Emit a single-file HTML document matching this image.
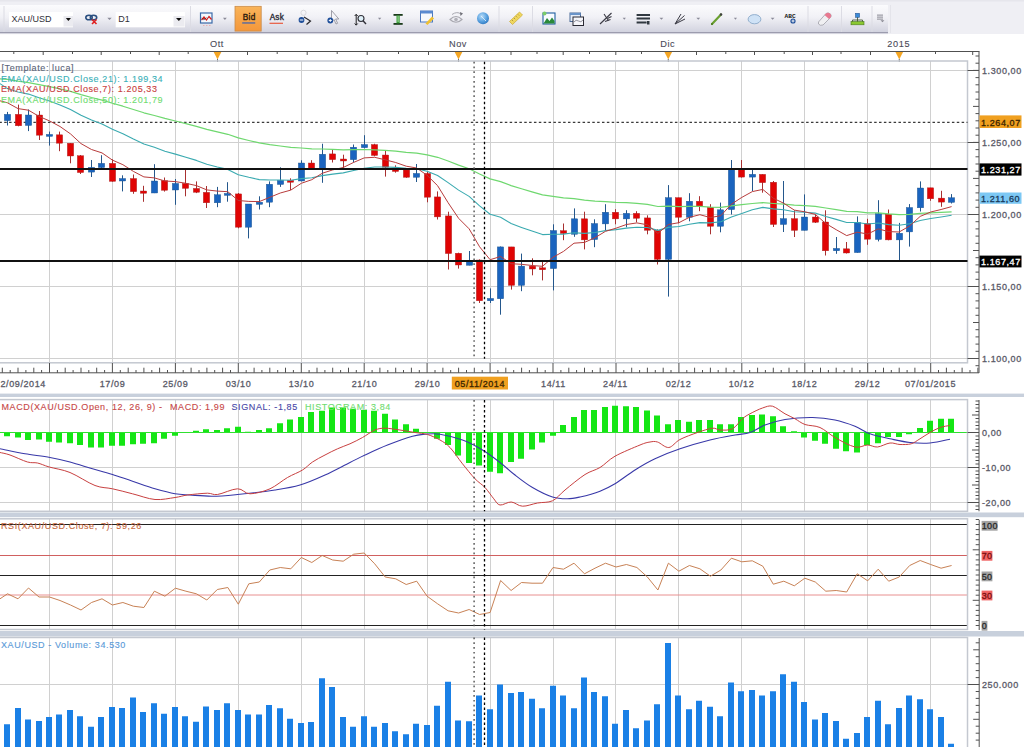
<!DOCTYPE html>
<html><head><meta charset="utf-8">
<style>
html,body{margin:0;padding:0;width:1024px;height:747px;overflow:hidden;background:#fff;font-family:"Liberation Sans", sans-serif;}
#chart{position:absolute;left:0;top:0;}
</style></head><body>
<svg id="chart" width="1024" height="747" viewBox="0 0 1024 747" font-family='"Liberation Sans", sans-serif' letter-spacing="0.6">
<line x1="0" y1="51.5" x2="979.5" y2="51.5" stroke="#505050" stroke-width="1"/>
<line x1="13.8" y1="51.5" x2="13.8" y2="54" stroke="#505050" stroke-width="1"/>
<line x1="43.2" y1="51.5" x2="43.2" y2="55" stroke="#505050" stroke-width="1"/>
<line x1="72.5" y1="51.5" x2="72.5" y2="54" stroke="#505050" stroke-width="1"/>
<line x1="101.2" y1="51.5" x2="101.2" y2="55" stroke="#505050" stroke-width="1"/>
<line x1="130.5" y1="51.5" x2="130.5" y2="54" stroke="#505050" stroke-width="1"/>
<line x1="159.2" y1="51.5" x2="159.2" y2="55" stroke="#505050" stroke-width="1"/>
<line x1="188.2" y1="51.5" x2="188.2" y2="54" stroke="#505050" stroke-width="1"/>
<line x1="247.5" y1="51.5" x2="247.5" y2="55" stroke="#505050" stroke-width="1"/>
<line x1="277.2" y1="51.5" x2="277.2" y2="54" stroke="#505050" stroke-width="1"/>
<line x1="307.2" y1="51.5" x2="307.2" y2="55" stroke="#505050" stroke-width="1"/>
<line x1="337.2" y1="51.5" x2="337.2" y2="54" stroke="#505050" stroke-width="1"/>
<line x1="367.2" y1="51.5" x2="367.2" y2="55" stroke="#505050" stroke-width="1"/>
<line x1="398.5" y1="51.5" x2="398.5" y2="54" stroke="#505050" stroke-width="1"/>
<line x1="428.5" y1="51.5" x2="428.5" y2="55" stroke="#505050" stroke-width="1"/>
<line x1="484.8" y1="51.5" x2="484.8" y2="54" stroke="#505050" stroke-width="1"/>
<line x1="511.0" y1="51.5" x2="511.0" y2="55" stroke="#505050" stroke-width="1"/>
<line x1="537.0" y1="51.5" x2="537.0" y2="54" stroke="#505050" stroke-width="1"/>
<line x1="563.2" y1="51.5" x2="563.2" y2="55" stroke="#505050" stroke-width="1"/>
<line x1="589.5" y1="51.5" x2="589.5" y2="54" stroke="#505050" stroke-width="1"/>
<line x1="615.8" y1="51.5" x2="615.8" y2="55" stroke="#505050" stroke-width="1"/>
<line x1="641.5" y1="51.5" x2="641.5" y2="54" stroke="#505050" stroke-width="1"/>
<line x1="696.5" y1="51.5" x2="696.5" y2="55" stroke="#505050" stroke-width="1"/>
<line x1="725.8" y1="51.5" x2="725.8" y2="54" stroke="#505050" stroke-width="1"/>
<line x1="754.5" y1="51.5" x2="754.5" y2="55" stroke="#505050" stroke-width="1"/>
<line x1="784.2" y1="51.5" x2="784.2" y2="54" stroke="#505050" stroke-width="1"/>
<line x1="812.5" y1="51.5" x2="812.5" y2="55" stroke="#505050" stroke-width="1"/>
<line x1="841.0" y1="51.5" x2="841.0" y2="54" stroke="#505050" stroke-width="1"/>
<line x1="870.5" y1="51.5" x2="870.5" y2="55" stroke="#505050" stroke-width="1"/>
<line x1="935.5" y1="51.5" x2="935.5" y2="54" stroke="#505050" stroke-width="1"/>
<line x1="972.7" y1="51.5" x2="972.7" y2="55" stroke="#505050" stroke-width="1"/>
<polygon points="213.7,52 221.3,52 217.5,59.5" fill="#f5a623"/>
<line x1="217.5" y1="59" x2="217.5" y2="62" stroke="#707070" stroke-width="1"/>
<text x="217.0" y="46.8" text-anchor="middle" font-size="9.2" stroke-width="0.1" fill="#4a4a58" stroke="#4a4a58">Ott</text>
<polygon points="454.7,52 462.3,52 458.5,59.5" fill="#f5a623"/>
<line x1="458.5" y1="59" x2="458.5" y2="62" stroke="#707070" stroke-width="1"/>
<text x="458.0" y="46.8" text-anchor="middle" font-size="9.2" stroke-width="0.1" fill="#4a4a58" stroke="#4a4a58">Nov</text>
<polygon points="664.45,52 672.05,52 668.25,59.5" fill="#f5a623"/>
<line x1="668.25" y1="59" x2="668.25" y2="62" stroke="#707070" stroke-width="1"/>
<text x="667.75" y="46.8" text-anchor="middle" font-size="9.2" stroke-width="0.1" fill="#4a4a58" stroke="#4a4a58">Dic</text>
<polygon points="895.45,52 903.05,52 899.25,59.5" fill="#f5a623"/>
<line x1="899.25" y1="59" x2="899.25" y2="62" stroke="#707070" stroke-width="1"/>
<text x="898.75" y="46.8" text-anchor="middle" font-size="9.2" stroke-width="0.1" fill="#4a4a58" stroke="#4a4a58">2015</text>
<line x1="49.5" y1="61" x2="49.5" y2="362.8" stroke="#d0d0d0" stroke-width="1"/>
<line x1="112.5" y1="61" x2="112.5" y2="362.8" stroke="#d0d0d0" stroke-width="1"/>
<line x1="175.5" y1="61" x2="175.5" y2="362.8" stroke="#d0d0d0" stroke-width="1"/>
<line x1="238.5" y1="61" x2="238.5" y2="362.8" stroke="#d0d0d0" stroke-width="1"/>
<line x1="301.5" y1="61" x2="301.5" y2="362.8" stroke="#d0d0d0" stroke-width="1"/>
<line x1="364.5" y1="61" x2="364.5" y2="362.8" stroke="#d0d0d0" stroke-width="1"/>
<line x1="427.5" y1="61" x2="427.5" y2="362.8" stroke="#d0d0d0" stroke-width="1"/>
<line x1="490.5" y1="61" x2="490.5" y2="362.8" stroke="#d0d0d0" stroke-width="1"/>
<line x1="553.5" y1="61" x2="553.5" y2="362.8" stroke="#d0d0d0" stroke-width="1"/>
<line x1="615.5" y1="61" x2="615.5" y2="362.8" stroke="#d0d0d0" stroke-width="1"/>
<line x1="678.5" y1="61" x2="678.5" y2="362.8" stroke="#d0d0d0" stroke-width="1"/>
<line x1="741.5" y1="61" x2="741.5" y2="362.8" stroke="#d0d0d0" stroke-width="1"/>
<line x1="804.5" y1="61" x2="804.5" y2="362.8" stroke="#d0d0d0" stroke-width="1"/>
<line x1="867.5" y1="61" x2="867.5" y2="362.8" stroke="#d0d0d0" stroke-width="1"/>
<line x1="930.5" y1="61" x2="930.5" y2="362.8" stroke="#d0d0d0" stroke-width="1"/>
<line x1="0" y1="70.5" x2="967.5" y2="70.5" stroke="#d0d0d0" stroke-width="1"/>
<line x1="0" y1="142.5" x2="967.5" y2="142.5" stroke="#d0d0d0" stroke-width="1"/>
<line x1="0" y1="214.5" x2="967.5" y2="214.5" stroke="#d0d0d0" stroke-width="1"/>
<line x1="0" y1="286.5" x2="967.5" y2="286.5" stroke="#d0d0d0" stroke-width="1"/>
<line x1="0" y1="358.5" x2="967.5" y2="358.5" stroke="#d0d0d0" stroke-width="1"/>
<rect x="-2" y="61" width="969.5" height="301.8" fill="none" stroke="#c4c8d0" stroke-width="1.5"/>
<line x1="979" y1="51.5" x2="979" y2="373" stroke="#505050" stroke-width="1"/>
<line x1="975.5" y1="56.0" x2="979" y2="56.0" stroke="#505050" stroke-width="1"/>
<line x1="975.5" y1="63.2" x2="979" y2="63.2" stroke="#505050" stroke-width="1"/>
<line x1="973" y1="70.4" x2="979" y2="70.4" stroke="#505050" stroke-width="1"/>
<line x1="975.5" y1="77.6" x2="979" y2="77.6" stroke="#505050" stroke-width="1"/>
<line x1="975.5" y1="84.8" x2="979" y2="84.8" stroke="#505050" stroke-width="1"/>
<line x1="975.5" y1="92.0" x2="979" y2="92.0" stroke="#505050" stroke-width="1"/>
<line x1="975.5" y1="99.2" x2="979" y2="99.2" stroke="#505050" stroke-width="1"/>
<line x1="973" y1="106.4" x2="979" y2="106.4" stroke="#505050" stroke-width="1"/>
<line x1="975.5" y1="113.6" x2="979" y2="113.6" stroke="#505050" stroke-width="1"/>
<line x1="975.5" y1="120.8" x2="979" y2="120.8" stroke="#505050" stroke-width="1"/>
<line x1="975.5" y1="128.0" x2="979" y2="128.0" stroke="#505050" stroke-width="1"/>
<line x1="975.5" y1="135.2" x2="979" y2="135.2" stroke="#505050" stroke-width="1"/>
<line x1="973" y1="142.4" x2="979" y2="142.4" stroke="#505050" stroke-width="1"/>
<line x1="975.5" y1="149.6" x2="979" y2="149.6" stroke="#505050" stroke-width="1"/>
<line x1="975.5" y1="156.8" x2="979" y2="156.8" stroke="#505050" stroke-width="1"/>
<line x1="975.5" y1="164.0" x2="979" y2="164.0" stroke="#505050" stroke-width="1"/>
<line x1="975.5" y1="171.2" x2="979" y2="171.2" stroke="#505050" stroke-width="1"/>
<line x1="973" y1="178.4" x2="979" y2="178.4" stroke="#505050" stroke-width="1"/>
<line x1="975.5" y1="185.6" x2="979" y2="185.6" stroke="#505050" stroke-width="1"/>
<line x1="975.5" y1="192.9" x2="979" y2="192.9" stroke="#505050" stroke-width="1"/>
<line x1="975.5" y1="200.1" x2="979" y2="200.1" stroke="#505050" stroke-width="1"/>
<line x1="975.5" y1="207.3" x2="979" y2="207.3" stroke="#505050" stroke-width="1"/>
<line x1="973" y1="214.5" x2="979" y2="214.5" stroke="#505050" stroke-width="1"/>
<line x1="975.5" y1="221.7" x2="979" y2="221.7" stroke="#505050" stroke-width="1"/>
<line x1="975.5" y1="228.9" x2="979" y2="228.9" stroke="#505050" stroke-width="1"/>
<line x1="975.5" y1="236.1" x2="979" y2="236.1" stroke="#505050" stroke-width="1"/>
<line x1="975.5" y1="243.3" x2="979" y2="243.3" stroke="#505050" stroke-width="1"/>
<line x1="973" y1="250.5" x2="979" y2="250.5" stroke="#505050" stroke-width="1"/>
<line x1="975.5" y1="257.7" x2="979" y2="257.7" stroke="#505050" stroke-width="1"/>
<line x1="975.5" y1="264.9" x2="979" y2="264.9" stroke="#505050" stroke-width="1"/>
<line x1="975.5" y1="272.1" x2="979" y2="272.1" stroke="#505050" stroke-width="1"/>
<line x1="975.5" y1="279.3" x2="979" y2="279.3" stroke="#505050" stroke-width="1"/>
<line x1="973" y1="286.5" x2="979" y2="286.5" stroke="#505050" stroke-width="1"/>
<line x1="975.5" y1="293.7" x2="979" y2="293.7" stroke="#505050" stroke-width="1"/>
<line x1="975.5" y1="300.9" x2="979" y2="300.9" stroke="#505050" stroke-width="1"/>
<line x1="975.5" y1="308.1" x2="979" y2="308.1" stroke="#505050" stroke-width="1"/>
<line x1="975.5" y1="315.3" x2="979" y2="315.3" stroke="#505050" stroke-width="1"/>
<line x1="973" y1="322.5" x2="979" y2="322.5" stroke="#505050" stroke-width="1"/>
<line x1="975.5" y1="329.7" x2="979" y2="329.7" stroke="#505050" stroke-width="1"/>
<line x1="975.5" y1="336.9" x2="979" y2="336.9" stroke="#505050" stroke-width="1"/>
<line x1="975.5" y1="344.1" x2="979" y2="344.1" stroke="#505050" stroke-width="1"/>
<line x1="975.5" y1="351.3" x2="979" y2="351.3" stroke="#505050" stroke-width="1"/>
<line x1="973" y1="358.5" x2="979" y2="358.5" stroke="#505050" stroke-width="1"/>
<line x1="975.5" y1="365.7" x2="979" y2="365.7" stroke="#505050" stroke-width="1"/>
<line x1="967.5" y1="70.5" x2="979" y2="70.5" stroke="#505050" stroke-width="1"/>
<text x="982" y="74.1" font-size="9" fill="#5a5a68" stroke="#5a5a68" stroke-width="0.3">1.300,00</text>
<line x1="967.5" y1="142.5" x2="979" y2="142.5" stroke="#505050" stroke-width="1"/>
<text x="982" y="146.1" font-size="9" fill="#5a5a68" stroke="#5a5a68" stroke-width="0.3">1.250,00</text>
<line x1="967.5" y1="214.5" x2="979" y2="214.5" stroke="#505050" stroke-width="1"/>
<text x="982" y="218.1" font-size="9" fill="#5a5a68" stroke="#5a5a68" stroke-width="0.3">1.200,00</text>
<line x1="967.5" y1="286.5" x2="979" y2="286.5" stroke="#505050" stroke-width="1"/>
<text x="982" y="290.1" font-size="9" fill="#5a5a68" stroke="#5a5a68" stroke-width="0.3">1.150,00</text>
<line x1="967.5" y1="358.5" x2="979" y2="358.5" stroke="#505050" stroke-width="1"/>
<text x="982" y="362.1" font-size="9" fill="#5a5a68" stroke="#5a5a68" stroke-width="0.3">1.100,00</text>
<line x1="0" y1="122.3" x2="967.5" y2="122.3" stroke="#3a3a3a" stroke-width="1.3" stroke-dasharray="2.5,2.36" stroke-dashoffset="0.64"/>
<line x1="7.5" y1="111.9" x2="7.5" y2="125.5" stroke="#24578c" stroke-width="1"/>
<rect x="4.3" y="114.3" width="6.4" height="6.4" fill="#1a64bf" stroke="#24578c" stroke-width="0.4"/>
<line x1="18.5" y1="104.6" x2="18.5" y2="126.3" stroke="#a83030" stroke-width="1"/>
<rect x="15.3" y="114.3" width="6.4" height="11.5" fill="#e00404" stroke="#a83030" stroke-width="0.4"/>
<line x1="28.5" y1="109.5" x2="28.5" y2="131.1" stroke="#24578c" stroke-width="1"/>
<rect x="25.3" y="115.0" width="6.4" height="10.5" fill="#1a64bf" stroke="#24578c" stroke-width="0.4"/>
<line x1="39.5" y1="111.0" x2="39.5" y2="140.0" stroke="#a83030" stroke-width="1"/>
<rect x="36.3" y="115.0" width="6.4" height="20.2" fill="#e00404" stroke="#a83030" stroke-width="0.4"/>
<line x1="49.5" y1="131.6" x2="49.5" y2="145.6" stroke="#24578c" stroke-width="1"/>
<rect x="46.3" y="134.4" width="6.4" height="2.0" fill="#1a64bf" stroke="#24578c" stroke-width="0.4"/>
<line x1="59.5" y1="131.6" x2="59.5" y2="151.2" stroke="#a83030" stroke-width="1"/>
<rect x="56.3" y="134.8" width="6.4" height="8.4" fill="#e00404" stroke="#a83030" stroke-width="0.4"/>
<line x1="70.5" y1="143.0" x2="70.5" y2="163.3" stroke="#a83030" stroke-width="1"/>
<rect x="67.3" y="143.2" width="6.4" height="12.8" fill="#e00404" stroke="#a83030" stroke-width="0.4"/>
<line x1="80.5" y1="155.0" x2="80.5" y2="174.0" stroke="#a83030" stroke-width="1"/>
<rect x="77.3" y="155.7" width="6.4" height="16.9" fill="#e00404" stroke="#a83030" stroke-width="0.4"/>
<line x1="91.5" y1="160.0" x2="91.5" y2="177.0" stroke="#24578c" stroke-width="1"/>
<rect x="88.3" y="167.3" width="6.4" height="4.8" fill="#1a64bf" stroke="#24578c" stroke-width="0.4"/>
<line x1="101.5" y1="155.2" x2="101.5" y2="168.0" stroke="#24578c" stroke-width="1"/>
<rect x="98.3" y="163.3" width="6.4" height="4.3" fill="#1a64bf" stroke="#24578c" stroke-width="0.4"/>
<line x1="112.5" y1="159.3" x2="112.5" y2="181.7" stroke="#a83030" stroke-width="1"/>
<rect x="109.3" y="163.3" width="6.4" height="18.1" fill="#e00404" stroke="#a83030" stroke-width="0.4"/>
<line x1="122.5" y1="175.3" x2="122.5" y2="191.4" stroke="#24578c" stroke-width="1"/>
<rect x="119.3" y="178.5" width="6.4" height="2.5" fill="#1a64bf" stroke="#24578c" stroke-width="0.4"/>
<line x1="133.5" y1="174.5" x2="133.5" y2="193.8" stroke="#a83030" stroke-width="1"/>
<rect x="130.3" y="178.5" width="6.4" height="13.2" fill="#e00404" stroke="#a83030" stroke-width="0.4"/>
<line x1="143.5" y1="185.8" x2="143.5" y2="201.8" stroke="#a83030" stroke-width="1"/>
<rect x="140.3" y="191.0" width="6.4" height="2.3" fill="#e00404" stroke="#a83030" stroke-width="0.4"/>
<line x1="154.5" y1="164.2" x2="154.5" y2="193.1" stroke="#24578c" stroke-width="1"/>
<rect x="151.3" y="181.0" width="6.4" height="12.0" fill="#1a64bf" stroke="#24578c" stroke-width="0.4"/>
<line x1="164.5" y1="177.5" x2="164.5" y2="191.6" stroke="#a83030" stroke-width="1"/>
<rect x="161.3" y="180.6" width="6.4" height="9.7" fill="#e00404" stroke="#a83030" stroke-width="0.4"/>
<line x1="175.5" y1="179.0" x2="175.5" y2="204.8" stroke="#24578c" stroke-width="1"/>
<rect x="172.3" y="183.4" width="6.4" height="6.6" fill="#1a64bf" stroke="#24578c" stroke-width="0.4"/>
<line x1="185.5" y1="169.7" x2="185.5" y2="196.3" stroke="#a83030" stroke-width="1"/>
<rect x="182.3" y="183.4" width="6.4" height="5.0" fill="#e00404" stroke="#a83030" stroke-width="0.4"/>
<line x1="196.5" y1="181.4" x2="196.5" y2="193.1" stroke="#a83030" stroke-width="1"/>
<rect x="193.3" y="188.4" width="6.4" height="3.9" fill="#e00404" stroke="#a83030" stroke-width="0.4"/>
<line x1="206.5" y1="186.0" x2="206.5" y2="208.0" stroke="#a83030" stroke-width="1"/>
<rect x="203.3" y="192.3" width="6.4" height="10.5" fill="#e00404" stroke="#a83030" stroke-width="0.4"/>
<line x1="217.5" y1="186.9" x2="217.5" y2="207.2" stroke="#24578c" stroke-width="1"/>
<rect x="214.3" y="194.7" width="6.4" height="8.1" fill="#1a64bf" stroke="#24578c" stroke-width="0.4"/>
<line x1="227.5" y1="182.2" x2="227.5" y2="201.7" stroke="#24578c" stroke-width="1"/>
<rect x="224.3" y="193.4" width="6.4" height="2.0" fill="#1a64bf" stroke="#24578c" stroke-width="0.4"/>
<line x1="238.5" y1="193.0" x2="238.5" y2="228.3" stroke="#a83030" stroke-width="1"/>
<rect x="235.3" y="193.9" width="6.4" height="33.3" fill="#e00404" stroke="#a83030" stroke-width="0.4"/>
<line x1="248.5" y1="204.0" x2="248.5" y2="238.4" stroke="#24578c" stroke-width="1"/>
<rect x="245.3" y="204.0" width="6.4" height="23.2" fill="#1a64bf" stroke="#24578c" stroke-width="0.4"/>
<line x1="259.5" y1="196.3" x2="259.5" y2="209.5" stroke="#24578c" stroke-width="1"/>
<rect x="256.3" y="202.2" width="6.4" height="2.2" fill="#1a64bf" stroke="#24578c" stroke-width="0.4"/>
<line x1="269.5" y1="181.4" x2="269.5" y2="207.2" stroke="#24578c" stroke-width="1"/>
<rect x="266.3" y="184.2" width="6.4" height="18.0" fill="#1a64bf" stroke="#24578c" stroke-width="0.4"/>
<line x1="280.5" y1="167.3" x2="280.5" y2="186.9" stroke="#24578c" stroke-width="1"/>
<rect x="277.3" y="180.3" width="6.4" height="4.2" fill="#1a64bf" stroke="#24578c" stroke-width="0.4"/>
<line x1="290.5" y1="178.3" x2="290.5" y2="190.0" stroke="#a83030" stroke-width="1"/>
<rect x="287.3" y="180.3" width="6.4" height="2.0" fill="#e00404" stroke="#a83030" stroke-width="0.4"/>
<line x1="301.5" y1="160.3" x2="301.5" y2="181.4" stroke="#24578c" stroke-width="1"/>
<rect x="298.3" y="163.0" width="6.4" height="18.0" fill="#1a64bf" stroke="#24578c" stroke-width="0.4"/>
<line x1="311.5" y1="160.2" x2="311.5" y2="169.5" stroke="#a83030" stroke-width="1"/>
<rect x="308.3" y="163.0" width="6.4" height="5.8" fill="#e00404" stroke="#a83030" stroke-width="0.4"/>
<line x1="322.5" y1="143.75" x2="322.5" y2="182.8" stroke="#24578c" stroke-width="1"/>
<rect x="319.3" y="154.2" width="6.4" height="14.6" fill="#1a64bf" stroke="#24578c" stroke-width="0.4"/>
<line x1="332.5" y1="150.0" x2="332.5" y2="162.5" stroke="#a83030" stroke-width="1"/>
<rect x="329.3" y="153.9" width="6.4" height="5.8" fill="#e00404" stroke="#a83030" stroke-width="0.4"/>
<line x1="343.5" y1="154.7" x2="343.5" y2="168.75" stroke="#a83030" stroke-width="1"/>
<rect x="340.3" y="159.0" width="6.4" height="2.0" fill="#e00404" stroke="#a83030" stroke-width="0.4"/>
<line x1="353.5" y1="144.5" x2="353.5" y2="162.5" stroke="#24578c" stroke-width="1"/>
<rect x="350.3" y="147.2" width="6.4" height="12.5" fill="#1a64bf" stroke="#24578c" stroke-width="0.4"/>
<line x1="364.5" y1="135.2" x2="364.5" y2="148.4" stroke="#24578c" stroke-width="1"/>
<rect x="361.3" y="144.5" width="6.4" height="3.2" fill="#1a64bf" stroke="#24578c" stroke-width="0.4"/>
<line x1="374.5" y1="143.75" x2="374.5" y2="156.25" stroke="#a83030" stroke-width="1"/>
<rect x="371.3" y="144.5" width="6.4" height="11.0" fill="#e00404" stroke="#a83030" stroke-width="0.4"/>
<line x1="385.5" y1="150.8" x2="385.5" y2="176.6" stroke="#a83030" stroke-width="1"/>
<rect x="382.3" y="155.0" width="6.4" height="12.2" fill="#e00404" stroke="#a83030" stroke-width="0.4"/>
<line x1="395.5" y1="165.3" x2="395.5" y2="172.7" stroke="#a83030" stroke-width="1"/>
<rect x="392.3" y="169.5" width="6.4" height="2.0" fill="#e00404" stroke="#a83030" stroke-width="0.4"/>
<line x1="406.5" y1="169.5" x2="406.5" y2="177.8" stroke="#a83030" stroke-width="1"/>
<rect x="403.3" y="170.0" width="6.4" height="7.3" fill="#e00404" stroke="#a83030" stroke-width="0.4"/>
<line x1="416.5" y1="164.0" x2="416.5" y2="182.0" stroke="#24578c" stroke-width="1"/>
<rect x="413.3" y="173.4" width="6.4" height="3.9" fill="#1a64bf" stroke="#24578c" stroke-width="0.4"/>
<line x1="427.5" y1="171.9" x2="427.5" y2="202.3" stroke="#a83030" stroke-width="1"/>
<rect x="424.3" y="173.4" width="6.4" height="23.8" fill="#e00404" stroke="#a83030" stroke-width="0.4"/>
<line x1="437.5" y1="191.4" x2="437.5" y2="219.5" stroke="#a83030" stroke-width="1"/>
<rect x="434.3" y="196.9" width="6.4" height="20.0" fill="#e00404" stroke="#a83030" stroke-width="0.4"/>
<line x1="448.5" y1="211.7" x2="448.5" y2="269.5" stroke="#a83030" stroke-width="1"/>
<rect x="445.3" y="215.9" width="6.4" height="37.7" fill="#e00404" stroke="#a83030" stroke-width="0.4"/>
<line x1="458.5" y1="252.7" x2="458.5" y2="268.6" stroke="#a83030" stroke-width="1"/>
<rect x="455.3" y="253.2" width="6.4" height="11.8" fill="#e00404" stroke="#a83030" stroke-width="0.4"/>
<line x1="469.5" y1="251.0" x2="469.5" y2="265.3" stroke="#24578c" stroke-width="1"/>
<rect x="466.3" y="260.3" width="6.4" height="5.0" fill="#1a64bf" stroke="#24578c" stroke-width="0.4"/>
<line x1="479.5" y1="259.4" x2="479.5" y2="303.0" stroke="#a83030" stroke-width="1"/>
<rect x="476.3" y="260.0" width="6.4" height="40.8" fill="#e00404" stroke="#a83030" stroke-width="0.4"/>
<line x1="490.5" y1="288.4" x2="490.5" y2="303.0" stroke="#24578c" stroke-width="1"/>
<rect x="487.3" y="298.4" width="6.4" height="2.4" fill="#1a64bf" stroke="#24578c" stroke-width="0.4"/>
<line x1="500.5" y1="246.5" x2="500.5" y2="314.7" stroke="#24578c" stroke-width="1"/>
<rect x="497.3" y="246.9" width="6.4" height="51.9" fill="#1a64bf" stroke="#24578c" stroke-width="0.4"/>
<line x1="511.5" y1="246.9" x2="511.5" y2="289.6" stroke="#a83030" stroke-width="1"/>
<rect x="508.3" y="246.9" width="6.4" height="38.5" fill="#e00404" stroke="#a83030" stroke-width="0.4"/>
<line x1="521.5" y1="253.6" x2="521.5" y2="291.2" stroke="#24578c" stroke-width="1"/>
<rect x="518.3" y="266.1" width="6.4" height="19.3" fill="#1a64bf" stroke="#24578c" stroke-width="0.4"/>
<line x1="532.5" y1="258.3" x2="532.5" y2="275.3" stroke="#a83030" stroke-width="1"/>
<rect x="529.3" y="266.1" width="6.4" height="2.9" fill="#e00404" stroke="#a83030" stroke-width="0.4"/>
<line x1="542.5" y1="261.0" x2="542.5" y2="280.4" stroke="#a83030" stroke-width="1"/>
<rect x="539.3" y="267.8" width="6.4" height="2.0" fill="#e00404" stroke="#a83030" stroke-width="0.4"/>
<line x1="553.5" y1="224.3" x2="553.5" y2="290.4" stroke="#24578c" stroke-width="1"/>
<rect x="550.3" y="230.5" width="6.4" height="38.1" fill="#1a64bf" stroke="#24578c" stroke-width="0.4"/>
<line x1="563.5" y1="223.5" x2="563.5" y2="240.2" stroke="#a83030" stroke-width="1"/>
<rect x="560.3" y="230.6" width="6.4" height="2.9" fill="#e00404" stroke="#a83030" stroke-width="0.4"/>
<line x1="574.5" y1="208.4" x2="574.5" y2="236.8" stroke="#24578c" stroke-width="1"/>
<rect x="571.3" y="218.8" width="6.4" height="15.5" fill="#1a64bf" stroke="#24578c" stroke-width="0.4"/>
<line x1="584.5" y1="211.7" x2="584.5" y2="249.4" stroke="#a83030" stroke-width="1"/>
<rect x="581.3" y="218.8" width="6.4" height="21.1" fill="#e00404" stroke="#a83030" stroke-width="0.4"/>
<line x1="594.5" y1="219.3" x2="594.5" y2="247.2" stroke="#24578c" stroke-width="1"/>
<rect x="591.3" y="223.5" width="6.4" height="16.1" fill="#1a64bf" stroke="#24578c" stroke-width="0.4"/>
<line x1="605.5" y1="204.2" x2="605.5" y2="230.3" stroke="#24578c" stroke-width="1"/>
<rect x="602.3" y="212.2" width="6.4" height="11.7" fill="#1a64bf" stroke="#24578c" stroke-width="0.4"/>
<line x1="615.5" y1="209.2" x2="615.5" y2="224.3" stroke="#a83030" stroke-width="1"/>
<rect x="612.3" y="212.2" width="6.4" height="6.7" fill="#e00404" stroke="#a83030" stroke-width="0.4"/>
<line x1="626.5" y1="210.2" x2="626.5" y2="227.3" stroke="#24578c" stroke-width="1"/>
<rect x="623.3" y="213.3" width="6.4" height="5.6" fill="#1a64bf" stroke="#24578c" stroke-width="0.4"/>
<line x1="636.5" y1="211.2" x2="636.5" y2="222.3" stroke="#a83030" stroke-width="1"/>
<rect x="633.3" y="213.3" width="6.4" height="5.0" fill="#e00404" stroke="#a83030" stroke-width="0.4"/>
<line x1="647.5" y1="215.3" x2="647.5" y2="234.3" stroke="#a83030" stroke-width="1"/>
<rect x="644.3" y="217.9" width="6.4" height="12.4" fill="#e00404" stroke="#a83030" stroke-width="0.4"/>
<line x1="657.5" y1="229.3" x2="657.5" y2="264.5" stroke="#a83030" stroke-width="1"/>
<rect x="654.3" y="230.3" width="6.4" height="29.1" fill="#e00404" stroke="#a83030" stroke-width="0.4"/>
<line x1="668.5" y1="185.1" x2="668.5" y2="296.6" stroke="#24578c" stroke-width="1"/>
<rect x="665.3" y="197.6" width="6.4" height="61.8" fill="#1a64bf" stroke="#24578c" stroke-width="0.4"/>
<line x1="678.5" y1="197.6" x2="678.5" y2="223.3" stroke="#a83030" stroke-width="1"/>
<rect x="675.3" y="197.6" width="6.4" height="19.7" fill="#e00404" stroke="#a83030" stroke-width="0.4"/>
<line x1="689.5" y1="193.2" x2="689.5" y2="221.3" stroke="#24578c" stroke-width="1"/>
<rect x="686.3" y="201.2" width="6.4" height="16.1" fill="#1a64bf" stroke="#24578c" stroke-width="0.4"/>
<line x1="699.5" y1="196.2" x2="699.5" y2="211.2" stroke="#a83030" stroke-width="1"/>
<rect x="696.3" y="201.2" width="6.4" height="5.6" fill="#e00404" stroke="#a83030" stroke-width="0.4"/>
<line x1="710.5" y1="204.2" x2="710.5" y2="234.3" stroke="#a83030" stroke-width="1"/>
<rect x="707.3" y="207.2" width="6.4" height="19.1" fill="#e00404" stroke="#a83030" stroke-width="0.4"/>
<line x1="720.5" y1="202.6" x2="720.5" y2="232.3" stroke="#24578c" stroke-width="1"/>
<rect x="717.3" y="209.8" width="6.4" height="16.5" fill="#1a64bf" stroke="#24578c" stroke-width="0.4"/>
<line x1="731.5" y1="160.0" x2="731.5" y2="214.5" stroke="#24578c" stroke-width="1"/>
<rect x="728.3" y="169.8" width="6.4" height="39.8" fill="#1a64bf" stroke="#24578c" stroke-width="0.4"/>
<line x1="741.5" y1="160.0" x2="741.5" y2="177.6" stroke="#a83030" stroke-width="1"/>
<rect x="738.3" y="169.8" width="6.4" height="7.3" fill="#e00404" stroke="#a83030" stroke-width="0.4"/>
<line x1="752.5" y1="168.4" x2="752.5" y2="191.0" stroke="#24578c" stroke-width="1"/>
<rect x="749.3" y="174.3" width="6.4" height="2.8" fill="#1a64bf" stroke="#24578c" stroke-width="0.4"/>
<line x1="762.5" y1="174.3" x2="762.5" y2="192.7" stroke="#a83030" stroke-width="1"/>
<rect x="759.3" y="174.3" width="6.4" height="8.4" fill="#e00404" stroke="#a83030" stroke-width="0.4"/>
<line x1="773.5" y1="181.0" x2="773.5" y2="227.0" stroke="#a83030" stroke-width="1"/>
<rect x="770.3" y="182.2" width="6.4" height="42.3" fill="#e00404" stroke="#a83030" stroke-width="0.4"/>
<line x1="783.5" y1="181.0" x2="783.5" y2="232.0" stroke="#24578c" stroke-width="1"/>
<rect x="780.3" y="218.6" width="6.4" height="5.9" fill="#1a64bf" stroke="#24578c" stroke-width="0.4"/>
<line x1="794.5" y1="210.3" x2="794.5" y2="237.0" stroke="#a83030" stroke-width="1"/>
<rect x="791.3" y="218.6" width="6.4" height="11.8" fill="#e00404" stroke="#a83030" stroke-width="0.4"/>
<line x1="804.5" y1="194.4" x2="804.5" y2="230.4" stroke="#24578c" stroke-width="1"/>
<rect x="801.3" y="217.0" width="6.4" height="13.4" fill="#1a64bf" stroke="#24578c" stroke-width="0.4"/>
<line x1="815.5" y1="214.5" x2="815.5" y2="223.0" stroke="#a83030" stroke-width="1"/>
<rect x="812.3" y="217.0" width="6.4" height="5.3" fill="#e00404" stroke="#a83030" stroke-width="0.4"/>
<line x1="825.5" y1="210.3" x2="825.5" y2="255.5" stroke="#a83030" stroke-width="1"/>
<rect x="822.3" y="222.0" width="6.4" height="28.8" fill="#e00404" stroke="#a83030" stroke-width="0.4"/>
<line x1="836.5" y1="237.0" x2="836.5" y2="253.8" stroke="#24578c" stroke-width="1"/>
<rect x="833.3" y="248.4" width="6.4" height="2.4" fill="#1a64bf" stroke="#24578c" stroke-width="0.4"/>
<line x1="846.5" y1="242.0" x2="846.5" y2="253.5" stroke="#a83030" stroke-width="1"/>
<rect x="843.3" y="248.8" width="6.4" height="4.2" fill="#e00404" stroke="#a83030" stroke-width="0.4"/>
<line x1="857.5" y1="216.4" x2="857.5" y2="252.6" stroke="#24578c" stroke-width="1"/>
<rect x="854.3" y="222.3" width="6.4" height="30.3" fill="#1a64bf" stroke="#24578c" stroke-width="0.4"/>
<line x1="867.5" y1="218.8" x2="867.5" y2="244.8" stroke="#a83030" stroke-width="1"/>
<rect x="864.3" y="223.5" width="6.4" height="15.7" fill="#e00404" stroke="#a83030" stroke-width="0.4"/>
<line x1="878.5" y1="200.2" x2="878.5" y2="241.4" stroke="#24578c" stroke-width="1"/>
<rect x="875.3" y="213.5" width="6.4" height="26.0" fill="#1a64bf" stroke="#24578c" stroke-width="0.4"/>
<line x1="888.5" y1="209.5" x2="888.5" y2="240.3" stroke="#a83030" stroke-width="1"/>
<rect x="885.3" y="214.2" width="6.4" height="25.7" fill="#e00404" stroke="#a83030" stroke-width="0.4"/>
<line x1="899.5" y1="222.9" x2="899.5" y2="261.0" stroke="#24578c" stroke-width="1"/>
<rect x="896.3" y="233.2" width="6.4" height="6.7" fill="#1a64bf" stroke="#24578c" stroke-width="0.4"/>
<line x1="909.5" y1="204.1" x2="909.5" y2="246.6" stroke="#24578c" stroke-width="1"/>
<rect x="906.3" y="207.5" width="6.4" height="24.4" fill="#1a64bf" stroke="#24578c" stroke-width="0.4"/>
<line x1="920.5" y1="181.4" x2="920.5" y2="211.5" stroke="#24578c" stroke-width="1"/>
<rect x="917.3" y="188.0" width="6.4" height="19.8" fill="#1a64bf" stroke="#24578c" stroke-width="0.4"/>
<line x1="930.5" y1="187.8" x2="930.5" y2="200.8" stroke="#a83030" stroke-width="1"/>
<rect x="927.3" y="187.8" width="6.4" height="11.0" fill="#e00404" stroke="#a83030" stroke-width="0.4"/>
<line x1="941.5" y1="190.8" x2="941.5" y2="206.8" stroke="#a83030" stroke-width="1"/>
<rect x="938.3" y="198.1" width="6.4" height="4.0" fill="#e00404" stroke="#a83030" stroke-width="0.4"/>
<line x1="951.5" y1="194.1" x2="951.5" y2="203.5" stroke="#24578c" stroke-width="1"/>
<rect x="948.3" y="197.7" width="6.4" height="4.7" fill="#1a64bf" stroke="#24578c" stroke-width="0.4"/>
<polyline points="0.0,78.9 7.5,79.4 18.0,81.2 28.5,82.6 39.0,84.6 49.5,86.6 60.0,88.8 70.5,91.4 81.0,94.6 91.5,97.5 102.0,100.1 112.4,103.2 122.9,106.2 133.4,109.5 143.9,112.8 154.4,115.5 164.9,118.4 175.4,121.0 185.9,123.6 196.4,126.3 206.8,129.3 217.3,131.9 227.8,134.3 238.3,137.9 248.8,140.5 259.3,142.9 269.8,144.6 280.3,146.0 290.8,147.4 301.3,148.0 311.8,148.8 322.2,149.0 332.7,149.4 343.2,149.8 353.7,149.7 364.2,149.5 374.7,149.8 385.2,150.4 395.7,151.2 406.2,152.3 416.7,153.1 427.1,154.8 437.6,157.3 448.1,161.0 458.6,165.1 469.1,168.8 479.6,174.0 490.1,178.9 500.6,181.6 511.1,185.6 521.5,188.8 532.0,191.9 542.5,194.9 553.0,196.3 563.5,197.8 574.0,198.6 584.5,200.2 595.0,201.1 605.5,201.6 616.0,202.3 626.4,202.7 636.9,203.3 647.4,204.4 657.9,206.5 668.4,206.2 678.9,206.6 689.4,206.4 699.9,206.4 710.4,207.2 720.9,207.3 731.4,205.8 741.8,204.7 752.3,203.5 762.8,202.7 773.3,203.5 783.8,204.1 794.3,205.2 804.8,205.6 815.3,206.3 825.8,208.0 836.2,209.6 846.7,211.3 857.2,211.7 867.7,212.8 878.2,212.8 888.7,213.9 899.2,214.7 909.7,214.4 920.2,213.3 930.7,212.8 941.1,212.4 951.6,211.8" fill="none" stroke="#6fd86f" stroke-width="1.2" stroke-linejoin="round"/>
<polyline points="0.0,83.6 7.5,88.6 18.0,92.0 28.5,94.1 39.0,97.8 49.5,101.1 60.0,104.9 70.5,109.6 81.0,115.3 91.5,120.0 102.0,124.0 112.4,129.2 122.9,133.7 133.4,139.0 143.9,143.9 154.4,147.3 164.9,151.2 175.4,154.1 185.9,157.2 196.4,160.4 206.8,164.3 217.3,167.0 227.8,169.4 238.3,174.7 248.8,177.3 259.3,179.6 269.8,180.0 280.3,180.0 290.8,180.2 301.3,178.6 311.8,177.7 322.2,175.6 332.7,174.1 343.2,172.9 353.7,170.5 364.2,168.2 374.7,167.0 385.2,167.0 395.7,167.4 406.2,168.3 416.7,168.7 427.1,171.3 437.6,175.5 448.1,182.6 458.6,190.1 469.1,196.4 479.6,205.9 490.1,214.3 500.6,217.3 511.1,223.5 521.5,227.4 532.0,231.1 542.5,234.6 553.0,234.2 563.5,234.1 574.0,232.7 584.5,233.4 595.0,232.5 605.5,230.6 616.0,229.6 626.4,228.1 636.9,227.2 647.4,227.5 657.9,230.4 668.4,227.4 678.9,226.5 689.4,224.2 699.9,222.6 710.4,222.9 720.9,221.7 731.4,217.0 741.8,213.4 752.3,209.8 762.8,207.4 773.3,208.9 783.8,209.8 794.3,211.7 804.8,212.2 815.3,213.1 825.8,216.5 836.2,219.4 846.7,222.5 857.2,222.5 867.7,224.0 878.2,223.0 888.7,224.6 899.2,225.3 909.7,223.7 920.2,220.5 930.7,218.5 941.1,217.0 951.6,215.3" fill="none" stroke="#3aaab0" stroke-width="1.1" stroke-linejoin="round"/>
<polyline points="0.0,100.8 7.5,102.8 18.0,108.6 28.5,110.2 39.0,116.4 49.5,120.9 60.0,126.5 70.5,133.9 81.0,143.6 91.5,149.5 102.0,152.9 112.4,160.1 122.9,164.7 133.4,171.4 143.9,176.9 154.4,177.9 164.9,181.0 175.4,181.6 185.9,183.3 196.4,185.6 206.8,189.9 217.3,191.1 227.8,191.7 238.3,200.5 248.8,201.4 259.3,201.6 269.8,197.3 280.3,193.0 290.8,190.1 301.3,183.3 311.8,179.7 322.2,173.3 332.7,169.9 343.2,167.5 353.7,162.4 364.2,157.9 374.7,157.3 385.2,159.8 395.7,162.5 406.2,166.2 416.7,168.0 427.1,175.3 437.6,185.7 448.1,202.7 458.6,218.3 469.1,228.8 479.6,246.8 490.1,259.7 500.6,256.5 511.1,263.7 521.5,264.3 532.0,265.5 542.5,266.3 553.0,257.3 563.5,251.4 574.0,243.2 584.5,242.4 595.0,237.7 605.5,231.3 616.0,228.2 626.4,224.5 636.9,222.9 647.4,224.8 657.9,233.4 668.4,224.5 678.9,222.7 689.4,217.3 699.9,214.7 710.4,217.6 720.9,215.6 731.4,204.2 741.8,197.4 752.3,191.6 762.8,189.4 773.3,198.2 783.8,203.3 794.3,210.1 804.8,211.8 815.3,214.4 825.8,223.5 836.2,229.7 846.7,235.6 857.2,232.2 867.7,234.0 878.2,228.9 888.7,231.6 899.2,232.0 909.7,225.9 920.2,216.4 930.7,212.0 941.1,209.5 951.6,206.6" fill="none" stroke="#b83c3c" stroke-width="1.0" stroke-linejoin="round"/>
<line x1="0" y1="169" x2="967.5" y2="169" stroke="#111" stroke-width="2"/>
<line x1="0" y1="261" x2="967.5" y2="261" stroke="#111" stroke-width="2"/>
<rect x="979.5" y="115.4" width="42" height="12.599999999999994" fill="#f0a020"/>
<text x="981" y="125.7" font-size="9" fill="#3a2400" stroke="#3a2400" stroke-width="0.3">1.264,07</text>
<rect x="979.5" y="163.4" width="42" height="12.199999999999989" fill="#000"/>
<text x="981" y="173.3" font-size="9" fill="#fff" stroke="#fff" stroke-width="0.3">1.231,27</text>
<rect x="979.5" y="192.5" width="42" height="11.300000000000011" fill="#7cc8f4"/>
<text x="981" y="201.5" font-size="9" fill="#1a3a5a" stroke="#1a3a5a" stroke-width="0.3">1.211,60</text>
<rect x="979.5" y="255.6" width="42" height="11.799999999999983" fill="#000"/>
<text x="981" y="265.1" font-size="9" fill="#fff" stroke="#fff" stroke-width="0.3">1.167,47</text>
<text x="1.5" y="71" font-size="9" stroke-width="0.12" fill="#5a6478" stroke="#5a6478">[Template: luca]</text>
<text x="1" y="81.5" font-size="9" stroke-width="0.12" fill="#3ab0b8" stroke="#3ab0b8">EMA(XAU/USD.Close,21): 1.199,34</text>
<text x="1" y="92" font-size="9" stroke-width="0.12" fill="#c84040" stroke="#c84040">EMA(XAU/USD.Close,7): 1.205,33</text>
<text x="1" y="102.5" font-size="9" stroke-width="0.12" fill="#70dc70" stroke="#70dc70">EMA(XAU/USD.Close,50): 1.201,79</text>
<line x1="0" y1="372.8" x2="979" y2="372.8" stroke="#505050" stroke-width="1"/>
<line x1="2.3" y1="367.7" x2="2.3" y2="372.8" stroke="#505050" stroke-width="1"/>
<line x1="10.2" y1="370" x2="10.2" y2="372.8" stroke="#505050" stroke-width="1"/>
<line x1="18.0" y1="367.7" x2="18.0" y2="372.8" stroke="#505050" stroke-width="1"/>
<line x1="25.9" y1="370" x2="25.9" y2="372.8" stroke="#505050" stroke-width="1"/>
<line x1="33.8" y1="367.7" x2="33.8" y2="372.8" stroke="#505050" stroke-width="1"/>
<line x1="41.6" y1="370" x2="41.6" y2="372.8" stroke="#505050" stroke-width="1"/>
<line x1="49.5" y1="363" x2="49.5" y2="372.8" stroke="#505050" stroke-width="1"/>
<line x1="57.4" y1="370" x2="57.4" y2="372.8" stroke="#505050" stroke-width="1"/>
<line x1="65.2" y1="367.7" x2="65.2" y2="372.8" stroke="#505050" stroke-width="1"/>
<line x1="73.1" y1="370" x2="73.1" y2="372.8" stroke="#505050" stroke-width="1"/>
<line x1="81.0" y1="367.7" x2="81.0" y2="372.8" stroke="#505050" stroke-width="1"/>
<line x1="88.8" y1="370" x2="88.8" y2="372.8" stroke="#505050" stroke-width="1"/>
<line x1="96.7" y1="367.7" x2="96.7" y2="372.8" stroke="#505050" stroke-width="1"/>
<line x1="104.6" y1="370" x2="104.6" y2="372.8" stroke="#505050" stroke-width="1"/>
<line x1="112.4" y1="363" x2="112.4" y2="372.8" stroke="#505050" stroke-width="1"/>
<line x1="120.3" y1="370" x2="120.3" y2="372.8" stroke="#505050" stroke-width="1"/>
<line x1="128.2" y1="367.7" x2="128.2" y2="372.8" stroke="#505050" stroke-width="1"/>
<line x1="136.0" y1="370" x2="136.0" y2="372.8" stroke="#505050" stroke-width="1"/>
<line x1="143.9" y1="367.7" x2="143.9" y2="372.8" stroke="#505050" stroke-width="1"/>
<line x1="151.8" y1="370" x2="151.8" y2="372.8" stroke="#505050" stroke-width="1"/>
<line x1="159.6" y1="367.7" x2="159.6" y2="372.8" stroke="#505050" stroke-width="1"/>
<line x1="167.5" y1="370" x2="167.5" y2="372.8" stroke="#505050" stroke-width="1"/>
<line x1="175.4" y1="363" x2="175.4" y2="372.8" stroke="#505050" stroke-width="1"/>
<line x1="183.2" y1="370" x2="183.2" y2="372.8" stroke="#505050" stroke-width="1"/>
<line x1="191.1" y1="367.7" x2="191.1" y2="372.8" stroke="#505050" stroke-width="1"/>
<line x1="199.0" y1="370" x2="199.0" y2="372.8" stroke="#505050" stroke-width="1"/>
<line x1="206.9" y1="367.7" x2="206.9" y2="372.8" stroke="#505050" stroke-width="1"/>
<line x1="214.7" y1="370" x2="214.7" y2="372.8" stroke="#505050" stroke-width="1"/>
<line x1="222.6" y1="367.7" x2="222.6" y2="372.8" stroke="#505050" stroke-width="1"/>
<line x1="230.5" y1="370" x2="230.5" y2="372.8" stroke="#505050" stroke-width="1"/>
<line x1="238.3" y1="363" x2="238.3" y2="372.8" stroke="#505050" stroke-width="1"/>
<line x1="246.2" y1="370" x2="246.2" y2="372.8" stroke="#505050" stroke-width="1"/>
<line x1="254.1" y1="367.7" x2="254.1" y2="372.8" stroke="#505050" stroke-width="1"/>
<line x1="261.9" y1="370" x2="261.9" y2="372.8" stroke="#505050" stroke-width="1"/>
<line x1="269.8" y1="367.7" x2="269.8" y2="372.8" stroke="#505050" stroke-width="1"/>
<line x1="277.7" y1="370" x2="277.7" y2="372.8" stroke="#505050" stroke-width="1"/>
<line x1="285.5" y1="367.7" x2="285.5" y2="372.8" stroke="#505050" stroke-width="1"/>
<line x1="293.4" y1="370" x2="293.4" y2="372.8" stroke="#505050" stroke-width="1"/>
<line x1="301.3" y1="363" x2="301.3" y2="372.8" stroke="#505050" stroke-width="1"/>
<line x1="309.1" y1="370" x2="309.1" y2="372.8" stroke="#505050" stroke-width="1"/>
<line x1="317.0" y1="367.7" x2="317.0" y2="372.8" stroke="#505050" stroke-width="1"/>
<line x1="324.9" y1="370" x2="324.9" y2="372.8" stroke="#505050" stroke-width="1"/>
<line x1="332.7" y1="367.7" x2="332.7" y2="372.8" stroke="#505050" stroke-width="1"/>
<line x1="340.6" y1="370" x2="340.6" y2="372.8" stroke="#505050" stroke-width="1"/>
<line x1="348.5" y1="367.7" x2="348.5" y2="372.8" stroke="#505050" stroke-width="1"/>
<line x1="356.3" y1="370" x2="356.3" y2="372.8" stroke="#505050" stroke-width="1"/>
<line x1="364.2" y1="363" x2="364.2" y2="372.8" stroke="#505050" stroke-width="1"/>
<line x1="372.1" y1="370" x2="372.1" y2="372.8" stroke="#505050" stroke-width="1"/>
<line x1="379.9" y1="367.7" x2="379.9" y2="372.8" stroke="#505050" stroke-width="1"/>
<line x1="387.8" y1="370" x2="387.8" y2="372.8" stroke="#505050" stroke-width="1"/>
<line x1="395.7" y1="367.7" x2="395.7" y2="372.8" stroke="#505050" stroke-width="1"/>
<line x1="403.5" y1="370" x2="403.5" y2="372.8" stroke="#505050" stroke-width="1"/>
<line x1="411.4" y1="367.7" x2="411.4" y2="372.8" stroke="#505050" stroke-width="1"/>
<line x1="419.3" y1="370" x2="419.3" y2="372.8" stroke="#505050" stroke-width="1"/>
<line x1="427.1" y1="363" x2="427.1" y2="372.8" stroke="#505050" stroke-width="1"/>
<line x1="435.0" y1="370" x2="435.0" y2="372.8" stroke="#505050" stroke-width="1"/>
<line x1="442.9" y1="367.7" x2="442.9" y2="372.8" stroke="#505050" stroke-width="1"/>
<line x1="450.7" y1="370" x2="450.7" y2="372.8" stroke="#505050" stroke-width="1"/>
<line x1="458.6" y1="367.7" x2="458.6" y2="372.8" stroke="#505050" stroke-width="1"/>
<line x1="466.5" y1="370" x2="466.5" y2="372.8" stroke="#505050" stroke-width="1"/>
<line x1="474.3" y1="367.7" x2="474.3" y2="372.8" stroke="#505050" stroke-width="1"/>
<line x1="482.2" y1="370" x2="482.2" y2="372.8" stroke="#505050" stroke-width="1"/>
<line x1="490.1" y1="363" x2="490.1" y2="372.8" stroke="#505050" stroke-width="1"/>
<line x1="497.9" y1="370" x2="497.9" y2="372.8" stroke="#505050" stroke-width="1"/>
<line x1="505.8" y1="367.7" x2="505.8" y2="372.8" stroke="#505050" stroke-width="1"/>
<line x1="513.7" y1="370" x2="513.7" y2="372.8" stroke="#505050" stroke-width="1"/>
<line x1="521.6" y1="367.7" x2="521.6" y2="372.8" stroke="#505050" stroke-width="1"/>
<line x1="529.4" y1="370" x2="529.4" y2="372.8" stroke="#505050" stroke-width="1"/>
<line x1="537.3" y1="367.7" x2="537.3" y2="372.8" stroke="#505050" stroke-width="1"/>
<line x1="545.2" y1="370" x2="545.2" y2="372.8" stroke="#505050" stroke-width="1"/>
<line x1="553.0" y1="363" x2="553.0" y2="372.8" stroke="#505050" stroke-width="1"/>
<line x1="560.9" y1="370" x2="560.9" y2="372.8" stroke="#505050" stroke-width="1"/>
<line x1="568.8" y1="367.7" x2="568.8" y2="372.8" stroke="#505050" stroke-width="1"/>
<line x1="576.6" y1="370" x2="576.6" y2="372.8" stroke="#505050" stroke-width="1"/>
<line x1="584.5" y1="367.7" x2="584.5" y2="372.8" stroke="#505050" stroke-width="1"/>
<line x1="592.4" y1="370" x2="592.4" y2="372.8" stroke="#505050" stroke-width="1"/>
<line x1="600.2" y1="367.7" x2="600.2" y2="372.8" stroke="#505050" stroke-width="1"/>
<line x1="608.1" y1="370" x2="608.1" y2="372.8" stroke="#505050" stroke-width="1"/>
<line x1="616.0" y1="363" x2="616.0" y2="372.8" stroke="#505050" stroke-width="1"/>
<line x1="623.8" y1="370" x2="623.8" y2="372.8" stroke="#505050" stroke-width="1"/>
<line x1="631.7" y1="367.7" x2="631.7" y2="372.8" stroke="#505050" stroke-width="1"/>
<line x1="639.6" y1="370" x2="639.6" y2="372.8" stroke="#505050" stroke-width="1"/>
<line x1="647.4" y1="367.7" x2="647.4" y2="372.8" stroke="#505050" stroke-width="1"/>
<line x1="655.3" y1="370" x2="655.3" y2="372.8" stroke="#505050" stroke-width="1"/>
<line x1="663.2" y1="367.7" x2="663.2" y2="372.8" stroke="#505050" stroke-width="1"/>
<line x1="671.0" y1="370" x2="671.0" y2="372.8" stroke="#505050" stroke-width="1"/>
<line x1="678.9" y1="363" x2="678.9" y2="372.8" stroke="#505050" stroke-width="1"/>
<line x1="686.8" y1="370" x2="686.8" y2="372.8" stroke="#505050" stroke-width="1"/>
<line x1="694.6" y1="367.7" x2="694.6" y2="372.8" stroke="#505050" stroke-width="1"/>
<line x1="702.5" y1="370" x2="702.5" y2="372.8" stroke="#505050" stroke-width="1"/>
<line x1="710.4" y1="367.7" x2="710.4" y2="372.8" stroke="#505050" stroke-width="1"/>
<line x1="718.2" y1="370" x2="718.2" y2="372.8" stroke="#505050" stroke-width="1"/>
<line x1="726.1" y1="367.7" x2="726.1" y2="372.8" stroke="#505050" stroke-width="1"/>
<line x1="734.0" y1="370" x2="734.0" y2="372.8" stroke="#505050" stroke-width="1"/>
<line x1="741.8" y1="363" x2="741.8" y2="372.8" stroke="#505050" stroke-width="1"/>
<line x1="749.7" y1="370" x2="749.7" y2="372.8" stroke="#505050" stroke-width="1"/>
<line x1="757.6" y1="367.7" x2="757.6" y2="372.8" stroke="#505050" stroke-width="1"/>
<line x1="765.4" y1="370" x2="765.4" y2="372.8" stroke="#505050" stroke-width="1"/>
<line x1="773.3" y1="367.7" x2="773.3" y2="372.8" stroke="#505050" stroke-width="1"/>
<line x1="781.2" y1="370" x2="781.2" y2="372.8" stroke="#505050" stroke-width="1"/>
<line x1="789.0" y1="367.7" x2="789.0" y2="372.8" stroke="#505050" stroke-width="1"/>
<line x1="796.9" y1="370" x2="796.9" y2="372.8" stroke="#505050" stroke-width="1"/>
<line x1="804.8" y1="363" x2="804.8" y2="372.8" stroke="#505050" stroke-width="1"/>
<line x1="812.6" y1="370" x2="812.6" y2="372.8" stroke="#505050" stroke-width="1"/>
<line x1="820.5" y1="367.7" x2="820.5" y2="372.8" stroke="#505050" stroke-width="1"/>
<line x1="828.4" y1="370" x2="828.4" y2="372.8" stroke="#505050" stroke-width="1"/>
<line x1="836.2" y1="367.7" x2="836.2" y2="372.8" stroke="#505050" stroke-width="1"/>
<line x1="844.1" y1="370" x2="844.1" y2="372.8" stroke="#505050" stroke-width="1"/>
<line x1="852.0" y1="367.7" x2="852.0" y2="372.8" stroke="#505050" stroke-width="1"/>
<line x1="859.9" y1="370" x2="859.9" y2="372.8" stroke="#505050" stroke-width="1"/>
<line x1="867.7" y1="363" x2="867.7" y2="372.8" stroke="#505050" stroke-width="1"/>
<line x1="875.6" y1="370" x2="875.6" y2="372.8" stroke="#505050" stroke-width="1"/>
<line x1="883.5" y1="367.7" x2="883.5" y2="372.8" stroke="#505050" stroke-width="1"/>
<line x1="891.3" y1="370" x2="891.3" y2="372.8" stroke="#505050" stroke-width="1"/>
<line x1="899.2" y1="367.7" x2="899.2" y2="372.8" stroke="#505050" stroke-width="1"/>
<line x1="907.1" y1="370" x2="907.1" y2="372.8" stroke="#505050" stroke-width="1"/>
<line x1="914.9" y1="367.7" x2="914.9" y2="372.8" stroke="#505050" stroke-width="1"/>
<line x1="922.8" y1="370" x2="922.8" y2="372.8" stroke="#505050" stroke-width="1"/>
<line x1="930.7" y1="363" x2="930.7" y2="372.8" stroke="#505050" stroke-width="1"/>
<line x1="938.5" y1="370" x2="938.5" y2="372.8" stroke="#505050" stroke-width="1"/>
<line x1="946.4" y1="367.7" x2="946.4" y2="372.8" stroke="#505050" stroke-width="1"/>
<line x1="954.3" y1="370" x2="954.3" y2="372.8" stroke="#505050" stroke-width="1"/>
<line x1="962.1" y1="367.7" x2="962.1" y2="372.8" stroke="#505050" stroke-width="1"/>
<line x1="970.0" y1="370" x2="970.0" y2="372.8" stroke="#505050" stroke-width="1"/>
<line x1="977.9" y1="367.7" x2="977.9" y2="372.8" stroke="#505050" stroke-width="1"/>
<text x="0.5" y="387" font-size="9" fill="#5a5a68" stroke="#5a5a68" stroke-width="0.3">2/09/2014</text>
<text x="112.5" y="387" text-anchor="middle" font-size="9" fill="#5a5a68" stroke="#5a5a68" stroke-width="0.3">17/09</text>
<text x="175.5" y="387" text-anchor="middle" font-size="9" fill="#5a5a68" stroke="#5a5a68" stroke-width="0.3">25/09</text>
<text x="238.5" y="387" text-anchor="middle" font-size="9" fill="#5a5a68" stroke="#5a5a68" stroke-width="0.3">03/10</text>
<text x="301.5" y="387" text-anchor="middle" font-size="9" fill="#5a5a68" stroke="#5a5a68" stroke-width="0.3">13/10</text>
<text x="364.5" y="387" text-anchor="middle" font-size="9" fill="#5a5a68" stroke="#5a5a68" stroke-width="0.3">21/10</text>
<text x="427.5" y="387" text-anchor="middle" font-size="9" fill="#5a5a68" stroke="#5a5a68" stroke-width="0.3">29/10</text>
<text x="553.5" y="387" text-anchor="middle" font-size="9" fill="#5a5a68" stroke="#5a5a68" stroke-width="0.3">14/11</text>
<text x="615.5" y="387" text-anchor="middle" font-size="9" fill="#5a5a68" stroke="#5a5a68" stroke-width="0.3">24/11</text>
<text x="678.5" y="387" text-anchor="middle" font-size="9" fill="#5a5a68" stroke="#5a5a68" stroke-width="0.3">02/12</text>
<text x="741.5" y="387" text-anchor="middle" font-size="9" fill="#5a5a68" stroke="#5a5a68" stroke-width="0.3">10/12</text>
<text x="804.5" y="387" text-anchor="middle" font-size="9" fill="#5a5a68" stroke="#5a5a68" stroke-width="0.3">18/12</text>
<text x="867.5" y="387" text-anchor="middle" font-size="9" fill="#5a5a68" stroke="#5a5a68" stroke-width="0.3">29/12</text>
<text x="930.5" y="387" text-anchor="middle" font-size="9" fill="#5a5a68" stroke="#5a5a68" stroke-width="0.3">07/01/2015</text>
<rect x="451.8" y="376.7" width="56.2" height="12.8" fill="#f0a020"/>
<text x="479.9" y="387" text-anchor="middle" font-size="9" fill="#3a2400" stroke="#3a2400" stroke-width="0.3">05/11/2014</text>
<rect x="0" y="393.6" width="1024" height="3.3999999999999773" fill="#c8d0dc"/>
<rect x="0" y="512.5" width="1024" height="4.7000000000000455" fill="#c8d0dc"/>
<rect x="0" y="631" width="1024" height="5.5" fill="#c8d0dc"/>
<line x1="49.5" y1="399.6" x2="49.5" y2="511.3" stroke="#d0d0d0" stroke-width="1"/>
<line x1="112.5" y1="399.6" x2="112.5" y2="511.3" stroke="#d0d0d0" stroke-width="1"/>
<line x1="175.5" y1="399.6" x2="175.5" y2="511.3" stroke="#d0d0d0" stroke-width="1"/>
<line x1="238.5" y1="399.6" x2="238.5" y2="511.3" stroke="#d0d0d0" stroke-width="1"/>
<line x1="301.5" y1="399.6" x2="301.5" y2="511.3" stroke="#d0d0d0" stroke-width="1"/>
<line x1="364.5" y1="399.6" x2="364.5" y2="511.3" stroke="#d0d0d0" stroke-width="1"/>
<line x1="427.5" y1="399.6" x2="427.5" y2="511.3" stroke="#d0d0d0" stroke-width="1"/>
<line x1="490.5" y1="399.6" x2="490.5" y2="511.3" stroke="#d0d0d0" stroke-width="1"/>
<line x1="553.5" y1="399.6" x2="553.5" y2="511.3" stroke="#d0d0d0" stroke-width="1"/>
<line x1="615.5" y1="399.6" x2="615.5" y2="511.3" stroke="#d0d0d0" stroke-width="1"/>
<line x1="678.5" y1="399.6" x2="678.5" y2="511.3" stroke="#d0d0d0" stroke-width="1"/>
<line x1="741.5" y1="399.6" x2="741.5" y2="511.3" stroke="#d0d0d0" stroke-width="1"/>
<line x1="804.5" y1="399.6" x2="804.5" y2="511.3" stroke="#d0d0d0" stroke-width="1"/>
<line x1="867.5" y1="399.6" x2="867.5" y2="511.3" stroke="#d0d0d0" stroke-width="1"/>
<line x1="930.5" y1="399.6" x2="930.5" y2="511.3" stroke="#d0d0d0" stroke-width="1"/>
<line x1="0" y1="467.5" x2="967.5" y2="467.5" stroke="#d0d0d0" stroke-width="1"/>
<line x1="0" y1="502.5" x2="967.5" y2="502.5" stroke="#d0d0d0" stroke-width="1"/>
<rect x="4" y="432.5" width="6" height="3.75" fill="#14e614"/>
<rect x="15" y="432.5" width="6" height="5.00" fill="#14e614"/>
<rect x="25" y="432.5" width="6" height="7.50" fill="#14e614"/>
<rect x="36" y="432.5" width="6" height="7.00" fill="#14e614"/>
<rect x="46" y="432.5" width="6" height="9.25" fill="#14e614"/>
<rect x="56" y="432.5" width="6" height="10.00" fill="#14e614"/>
<rect x="67" y="432.5" width="6" height="10.75" fill="#14e614"/>
<rect x="77" y="432.5" width="6" height="12.50" fill="#14e614"/>
<rect x="88" y="432.5" width="6" height="15.00" fill="#14e614"/>
<rect x="98" y="432.5" width="6" height="15.00" fill="#14e614"/>
<rect x="109" y="432.5" width="6" height="13.25" fill="#14e614"/>
<rect x="119" y="432.5" width="6" height="13.25" fill="#14e614"/>
<rect x="130" y="432.5" width="6" height="11.75" fill="#14e614"/>
<rect x="140" y="432.5" width="6" height="11.25" fill="#14e614"/>
<rect x="151" y="432.5" width="6" height="10.75" fill="#14e614"/>
<rect x="161" y="432.5" width="6" height="6.25" fill="#14e614"/>
<rect x="172" y="432.5" width="6" height="3.25" fill="#14e614"/>
<rect x="182" y="432.2" width="6" height="0.60" fill="#14e614"/>
<rect x="193" y="430.75" width="6" height="1.75" fill="#14e614"/>
<rect x="203" y="429.25" width="6" height="3.25" fill="#14e614"/>
<rect x="214" y="430" width="6" height="2.50" fill="#14e614"/>
<rect x="224" y="428.25" width="6" height="4.25" fill="#14e614"/>
<rect x="235" y="426.75" width="6" height="5.75" fill="#14e614"/>
<rect x="245" y="431.75" width="6" height="0.75" fill="#14e614"/>
<rect x="256" y="430" width="6" height="2.50" fill="#14e614"/>
<rect x="266" y="428.25" width="6" height="4.25" fill="#14e614"/>
<rect x="277" y="423.25" width="6" height="9.25" fill="#14e614"/>
<rect x="287" y="419.5" width="6" height="13.00" fill="#14e614"/>
<rect x="298" y="417" width="6" height="15.50" fill="#14e614"/>
<rect x="308" y="412" width="6" height="20.50" fill="#14e614"/>
<rect x="319" y="410.75" width="6" height="21.75" fill="#14e614"/>
<rect x="329" y="407.5" width="6" height="25.00" fill="#14e614"/>
<rect x="340" y="407.5" width="6" height="25.00" fill="#14e614"/>
<rect x="350" y="408.75" width="6" height="23.75" fill="#14e614"/>
<rect x="361" y="410" width="6" height="22.50" fill="#14e614"/>
<rect x="371" y="410.75" width="6" height="21.75" fill="#14e614"/>
<rect x="382" y="413.75" width="6" height="18.75" fill="#14e614"/>
<rect x="392" y="419.5" width="6" height="13.00" fill="#14e614"/>
<rect x="403" y="424.25" width="6" height="8.25" fill="#14e614"/>
<rect x="413" y="428.75" width="6" height="3.75" fill="#14e614"/>
<rect x="424" y="432.2" width="6" height="0.60" fill="#14e614"/>
<rect x="434" y="432.5" width="6" height="6.25" fill="#14e614"/>
<rect x="445" y="432.5" width="6" height="12.50" fill="#14e614"/>
<rect x="455" y="432.5" width="6" height="23.00" fill="#14e614"/>
<rect x="466" y="432.5" width="6" height="30.50" fill="#14e614"/>
<rect x="476" y="432.5" width="6" height="33.00" fill="#14e614"/>
<rect x="487" y="432.5" width="6" height="39.25" fill="#14e614"/>
<rect x="497" y="432.5" width="6" height="40.75" fill="#14e614"/>
<rect x="508" y="432.5" width="6" height="29.50" fill="#14e614"/>
<rect x="518" y="432.5" width="6" height="26.25" fill="#14e614"/>
<rect x="529" y="432.5" width="6" height="17.00" fill="#14e614"/>
<rect x="539" y="432.5" width="6" height="10.00" fill="#14e614"/>
<rect x="550" y="432.5" width="6" height="3.25" fill="#14e614"/>
<rect x="560" y="425" width="6" height="7.50" fill="#14e614"/>
<rect x="571" y="417" width="6" height="15.50" fill="#14e614"/>
<rect x="581" y="410" width="6" height="22.50" fill="#14e614"/>
<rect x="591" y="410" width="6" height="22.50" fill="#14e614"/>
<rect x="602" y="407" width="6" height="25.50" fill="#14e614"/>
<rect x="612" y="405.75" width="6" height="26.75" fill="#14e614"/>
<rect x="623" y="406.25" width="6" height="26.25" fill="#14e614"/>
<rect x="633" y="407" width="6" height="25.50" fill="#14e614"/>
<rect x="644" y="410.5" width="6" height="22.00" fill="#14e614"/>
<rect x="654" y="415.5" width="6" height="17.00" fill="#14e614"/>
<rect x="665" y="424.25" width="6" height="8.25" fill="#14e614"/>
<rect x="675" y="420" width="6" height="12.50" fill="#14e614"/>
<rect x="686" y="421.75" width="6" height="10.75" fill="#14e614"/>
<rect x="696" y="420" width="6" height="12.50" fill="#14e614"/>
<rect x="707" y="420" width="6" height="12.50" fill="#14e614"/>
<rect x="717" y="424.25" width="6" height="8.25" fill="#14e614"/>
<rect x="728" y="424.25" width="6" height="8.25" fill="#14e614"/>
<rect x="738" y="417" width="6" height="15.50" fill="#14e614"/>
<rect x="749" y="415" width="6" height="17.50" fill="#14e614"/>
<rect x="759" y="414.5" width="6" height="18.00" fill="#14e614"/>
<rect x="770" y="416.25" width="6" height="16.25" fill="#14e614"/>
<rect x="780" y="426.25" width="6" height="6.25" fill="#14e614"/>
<rect x="791" y="431.25" width="6" height="1.25" fill="#14e614"/>
<rect x="801" y="432.5" width="6" height="5.00" fill="#14e614"/>
<rect x="812" y="432.5" width="6" height="8.25" fill="#14e614"/>
<rect x="822" y="432.5" width="6" height="11.25" fill="#14e614"/>
<rect x="833" y="432.5" width="6" height="16.25" fill="#14e614"/>
<rect x="843" y="432.5" width="6" height="18.75" fill="#14e614"/>
<rect x="854" y="432.5" width="6" height="20.00" fill="#14e614"/>
<rect x="864" y="432.5" width="6" height="12.50" fill="#14e614"/>
<rect x="875" y="432.5" width="6" height="10.75" fill="#14e614"/>
<rect x="885" y="432.5" width="6" height="4.50" fill="#14e614"/>
<rect x="896" y="432.5" width="6" height="4.50" fill="#14e614"/>
<rect x="906" y="432.5" width="6" height="1.75" fill="#14e614"/>
<rect x="917" y="428" width="6" height="4.50" fill="#14e614"/>
<rect x="927" y="420.75" width="6" height="11.75" fill="#14e614"/>
<rect x="938" y="418.75" width="6" height="13.75" fill="#14e614"/>
<rect x="948" y="418.75" width="6" height="13.75" fill="#14e614"/>
<line x1="0" y1="432.5" x2="967.5" y2="432.5" stroke="#30e030" stroke-width="1.2"/>
<path d="M0.0,448.8 C4.2,449.6 16.7,452.3 25.0,453.8 C33.3,455.2 42.5,456.1 50.0,457.5 C57.5,458.9 62.9,460.1 70.0,462.0 C77.1,463.9 85.4,466.7 92.5,468.8 C99.6,470.8 105.8,472.4 112.5,474.5 C119.2,476.6 125.4,478.9 132.5,481.2 C139.6,483.6 147.9,486.7 155.0,488.8 C162.1,490.8 169.2,492.7 175.0,493.8 C180.8,494.8 183.8,494.6 190.0,495.0 C196.2,495.4 204.6,496.3 212.5,496.2 C220.4,496.2 227.1,495.5 237.5,494.5 C247.9,493.5 264.6,491.6 275.0,490.0 C285.4,488.4 291.7,487.5 300.0,485.0 C308.3,482.5 316.7,478.8 325.0,475.0 C333.3,471.2 343.3,465.8 350.0,462.5 C356.7,459.2 358.8,457.9 365.0,455.0 C371.2,452.1 379.6,448.1 387.5,445.0 C395.4,441.9 406.2,438.0 412.5,436.2 C418.8,434.5 420.4,434.6 425.0,434.2 C429.6,433.9 433.8,433.3 440.0,434.2 C446.2,435.2 455.4,437.4 462.5,440.0 C469.6,442.6 476.2,446.2 482.5,450.0 C488.8,453.8 494.6,458.3 500.0,462.5 C505.4,466.7 509.6,470.8 515.0,475.0 C520.4,479.2 526.2,483.8 532.5,487.5 C538.8,491.2 546.7,495.1 552.5,497.0 C558.3,498.9 562.9,498.8 567.5,498.8 C572.1,498.8 574.6,498.2 580.0,497.0 C585.4,495.8 594.2,493.5 600.0,491.2 C605.8,489.0 609.2,487.3 615.0,483.8 C620.8,480.2 628.3,474.2 635.0,470.0 C641.7,465.8 647.5,462.3 655.0,458.8 C662.5,455.2 670.8,451.9 680.0,448.8 C689.2,445.6 700.8,442.3 710.0,440.0 C719.2,437.7 728.3,436.2 735.0,435.0 C741.7,433.8 745.0,434.2 750.0,432.5 C755.0,430.8 759.2,427.2 765.0,425.0 C770.8,422.8 777.1,420.8 785.0,419.5 C792.9,418.2 804.2,417.4 812.5,417.5 C820.8,417.6 827.9,418.5 835.0,420.0 C842.1,421.5 849.2,424.0 855.0,426.2 C860.8,428.5 864.2,431.7 870.0,433.8 C875.8,435.8 883.3,437.3 890.0,438.8 C896.7,440.2 903.3,441.8 910.0,442.5 C916.7,443.2 923.3,443.5 930.0,443.0 C936.7,442.5 946.7,439.9 950.0,439.2" fill="none" stroke="#3838a8" stroke-width="1.1"/>
<path d="M0.0,452.5 C1.7,452.9 5.4,453.4 10.0,455.0 C14.6,456.6 22.9,460.7 27.5,462.0 C32.1,463.3 33.9,462.2 37.5,463.0 C41.1,463.8 43.8,465.4 49.2,467.0 C54.7,468.6 62.4,469.4 70.0,472.5 C77.6,475.6 87.9,482.8 95.0,485.5 C102.1,488.2 106.2,487.4 112.5,488.8 C118.8,490.1 125.4,492.0 132.5,493.8 C139.6,495.5 147.9,498.9 155.0,499.5 C162.1,500.1 169.6,498.2 175.0,497.5 C180.4,496.8 182.1,495.7 187.5,495.0 C192.9,494.3 202.5,493.3 207.5,493.2 C212.5,493.2 212.5,495.2 217.5,494.5 C222.5,493.8 232.1,488.9 237.5,488.8 C242.9,488.6 244.6,493.8 250.0,493.8 C255.4,493.8 263.8,491.5 270.0,488.8 C276.2,486.0 282.1,480.6 287.5,477.5 C292.9,474.4 298.3,472.6 302.5,470.0 C306.7,467.4 308.8,464.5 312.5,462.0 C316.2,459.5 320.8,457.2 325.0,455.0 C329.2,452.8 333.3,450.6 337.5,448.8 C341.7,446.9 345.8,445.6 350.0,443.8 C354.2,441.9 358.3,439.8 362.5,437.5 C366.7,435.2 371.2,431.5 375.0,430.0 C378.8,428.5 380.8,428.2 385.0,428.2 C389.2,428.2 395.0,429.3 400.0,430.0 C405.0,430.7 410.4,431.8 415.0,432.5 C419.6,433.2 423.3,433.2 427.5,434.5 C431.7,435.8 436.2,437.8 440.0,440.0 C443.8,442.2 446.2,443.5 450.0,447.5 C453.8,451.5 458.3,458.5 462.5,463.8 C466.7,469.0 471.2,474.8 475.0,478.8 C478.8,482.7 481.9,484.2 485.0,487.5 C488.1,490.8 491.2,495.8 493.8,498.8 C496.2,501.7 497.1,504.5 500.0,505.0 C502.9,505.5 507.5,501.8 511.2,502.0 C515.0,502.2 518.1,506.1 522.5,506.2 C526.9,506.4 532.5,503.9 537.5,503.0 C542.5,502.1 547.9,502.9 552.5,500.8 C557.1,498.6 559.6,494.4 565.0,490.0 C570.4,485.6 579.2,478.2 585.0,474.5 C590.8,470.8 595.0,470.5 600.0,467.5 C605.0,464.5 608.3,460.0 615.0,456.2 C621.7,452.5 634.2,447.4 640.0,445.0 C645.8,442.6 647.1,442.5 650.0,442.0 C652.9,441.5 654.4,441.1 657.5,442.0 C660.6,442.9 665.0,447.9 668.8,447.5 C672.5,447.1 675.2,442.0 680.0,439.5 C684.8,437.0 692.1,434.4 697.5,432.5 C702.9,430.6 708.8,428.7 712.5,428.2 C716.2,427.8 716.7,429.9 720.0,430.0 C723.3,430.1 728.8,430.6 732.5,428.8 C736.2,426.9 739.6,421.2 742.5,418.8 C745.4,416.2 746.7,415.5 750.0,413.8 C753.3,412.0 758.8,409.2 762.5,408.0 C766.2,406.8 768.8,405.3 772.5,406.2 C776.2,407.2 781.2,411.7 785.0,413.8 C788.8,415.8 791.7,417.0 795.0,418.8 C798.3,420.5 800.8,423.0 805.0,424.5 C809.2,426.0 815.0,425.3 820.0,427.5 C825.0,429.7 829.2,434.2 835.0,437.5 C840.8,440.8 849.6,445.8 855.0,447.0 C860.4,448.2 863.8,445.0 867.5,445.0 C871.2,445.0 873.8,447.3 877.5,447.0 C881.2,446.7 886.2,443.4 890.0,443.0 C893.8,442.6 896.5,444.4 900.0,444.5 C903.5,444.6 907.9,444.7 911.2,443.8 C914.6,442.8 916.9,440.6 920.0,438.8 C923.1,436.9 926.7,434.4 930.0,432.5 C933.3,430.6 936.7,428.7 940.0,427.5 C943.3,426.3 948.3,425.8 950.0,425.5" fill="none" stroke="#c84040" stroke-width="1.0"/>
<rect x="-2" y="399.6" width="969.5" height="111.69999999999999" fill="none" stroke="#c4c8d0" stroke-width="1.5"/>
<line x1="979" y1="400" x2="979" y2="511.3" stroke="#505050" stroke-width="1"/>
<line x1="975.5" y1="401.0" x2="979" y2="401.0" stroke="#505050" stroke-width="1"/>
<line x1="975.5" y1="404.5" x2="979" y2="404.5" stroke="#505050" stroke-width="1"/>
<line x1="975.5" y1="408.0" x2="979" y2="408.0" stroke="#505050" stroke-width="1"/>
<line x1="975.5" y1="411.5" x2="979" y2="411.5" stroke="#505050" stroke-width="1"/>
<line x1="972" y1="415.0" x2="979" y2="415.0" stroke="#505050" stroke-width="1"/>
<line x1="975.5" y1="418.5" x2="979" y2="418.5" stroke="#505050" stroke-width="1"/>
<line x1="975.5" y1="422.0" x2="979" y2="422.0" stroke="#505050" stroke-width="1"/>
<line x1="975.5" y1="425.5" x2="979" y2="425.5" stroke="#505050" stroke-width="1"/>
<line x1="975.5" y1="429.0" x2="979" y2="429.0" stroke="#505050" stroke-width="1"/>
<line x1="972" y1="432.5" x2="979" y2="432.5" stroke="#505050" stroke-width="1"/>
<line x1="975.5" y1="436.0" x2="979" y2="436.0" stroke="#505050" stroke-width="1"/>
<line x1="975.5" y1="439.5" x2="979" y2="439.5" stroke="#505050" stroke-width="1"/>
<line x1="975.5" y1="443.0" x2="979" y2="443.0" stroke="#505050" stroke-width="1"/>
<line x1="975.5" y1="446.5" x2="979" y2="446.5" stroke="#505050" stroke-width="1"/>
<line x1="972" y1="450.0" x2="979" y2="450.0" stroke="#505050" stroke-width="1"/>
<line x1="975.5" y1="453.5" x2="979" y2="453.5" stroke="#505050" stroke-width="1"/>
<line x1="975.5" y1="457.0" x2="979" y2="457.0" stroke="#505050" stroke-width="1"/>
<line x1="975.5" y1="460.5" x2="979" y2="460.5" stroke="#505050" stroke-width="1"/>
<line x1="975.5" y1="464.0" x2="979" y2="464.0" stroke="#505050" stroke-width="1"/>
<line x1="972" y1="467.5" x2="979" y2="467.5" stroke="#505050" stroke-width="1"/>
<line x1="975.5" y1="471.0" x2="979" y2="471.0" stroke="#505050" stroke-width="1"/>
<line x1="975.5" y1="474.5" x2="979" y2="474.5" stroke="#505050" stroke-width="1"/>
<line x1="975.5" y1="478.0" x2="979" y2="478.0" stroke="#505050" stroke-width="1"/>
<line x1="975.5" y1="481.5" x2="979" y2="481.5" stroke="#505050" stroke-width="1"/>
<line x1="972" y1="485.0" x2="979" y2="485.0" stroke="#505050" stroke-width="1"/>
<line x1="975.5" y1="488.5" x2="979" y2="488.5" stroke="#505050" stroke-width="1"/>
<line x1="975.5" y1="492.0" x2="979" y2="492.0" stroke="#505050" stroke-width="1"/>
<line x1="975.5" y1="495.5" x2="979" y2="495.5" stroke="#505050" stroke-width="1"/>
<line x1="975.5" y1="499.0" x2="979" y2="499.0" stroke="#505050" stroke-width="1"/>
<line x1="972" y1="502.5" x2="979" y2="502.5" stroke="#505050" stroke-width="1"/>
<line x1="975.5" y1="506.0" x2="979" y2="506.0" stroke="#505050" stroke-width="1"/>
<line x1="975.5" y1="509.5" x2="979" y2="509.5" stroke="#505050" stroke-width="1"/>
<line x1="967.5" y1="432.5" x2="979" y2="432.5" stroke="#505050" stroke-width="1"/>
<text x="982" y="436.1" font-size="9" fill="#5a5a68" stroke="#5a5a68" stroke-width="0.3">0,00</text>
<line x1="967.5" y1="467.5" x2="979" y2="467.5" stroke="#505050" stroke-width="1"/>
<text x="982" y="471.1" font-size="9" fill="#5a5a68" stroke="#5a5a68" stroke-width="0.3">-10,00</text>
<line x1="967.5" y1="502.5" x2="979" y2="502.5" stroke="#505050" stroke-width="1"/>
<text x="982" y="506.1" font-size="9" fill="#5a5a68" stroke="#5a5a68" stroke-width="0.3">-20,00</text>
<text x="1.5" y="410" font-size="9" stroke-width="0.12" fill="#c84848" stroke="#c84848">MACD(XAU/USD.Open, 12, 26, 9) -</text>
<text x="170" y="410" font-size="9" stroke-width="0.12" fill="#c84848" stroke="#c84848">MACD: 1,99</text>
<text x="231.5" y="410" font-size="9" stroke-width="0.12" fill="#4848a8" stroke="#4848a8">SIGNAL: -1,85</text>
<text x="305" y="410" font-size="9" stroke-width="0.12" fill="#70dc70" stroke="#70dc70">HISTOGRAM: 3,84</text>
<line x1="49.5" y1="518.8" x2="49.5" y2="629.5" stroke="#d0d0d0" stroke-width="1"/>
<line x1="112.5" y1="518.8" x2="112.5" y2="629.5" stroke="#d0d0d0" stroke-width="1"/>
<line x1="175.5" y1="518.8" x2="175.5" y2="629.5" stroke="#d0d0d0" stroke-width="1"/>
<line x1="238.5" y1="518.8" x2="238.5" y2="629.5" stroke="#d0d0d0" stroke-width="1"/>
<line x1="301.5" y1="518.8" x2="301.5" y2="629.5" stroke="#d0d0d0" stroke-width="1"/>
<line x1="364.5" y1="518.8" x2="364.5" y2="629.5" stroke="#d0d0d0" stroke-width="1"/>
<line x1="427.5" y1="518.8" x2="427.5" y2="629.5" stroke="#d0d0d0" stroke-width="1"/>
<line x1="490.5" y1="518.8" x2="490.5" y2="629.5" stroke="#d0d0d0" stroke-width="1"/>
<line x1="553.5" y1="518.8" x2="553.5" y2="629.5" stroke="#d0d0d0" stroke-width="1"/>
<line x1="615.5" y1="518.8" x2="615.5" y2="629.5" stroke="#d0d0d0" stroke-width="1"/>
<line x1="678.5" y1="518.8" x2="678.5" y2="629.5" stroke="#d0d0d0" stroke-width="1"/>
<line x1="741.5" y1="518.8" x2="741.5" y2="629.5" stroke="#d0d0d0" stroke-width="1"/>
<line x1="804.5" y1="518.8" x2="804.5" y2="629.5" stroke="#d0d0d0" stroke-width="1"/>
<line x1="867.5" y1="518.8" x2="867.5" y2="629.5" stroke="#d0d0d0" stroke-width="1"/>
<line x1="930.5" y1="518.8" x2="930.5" y2="629.5" stroke="#d0d0d0" stroke-width="1"/>
<line x1="0" y1="555.5" x2="967.5" y2="555.5" stroke="#d06060" stroke-width="1"/>
<line x1="0" y1="595" x2="967.5" y2="595" stroke="#e89090" stroke-width="1"/>
<line x1="0" y1="524.5" x2="967.5" y2="524.5" stroke="#222" stroke-width="1.2"/>
<line x1="0" y1="575.5" x2="967.5" y2="575.5" stroke="#222" stroke-width="1.2"/>
<line x1="0" y1="625.5" x2="967.5" y2="625.5" stroke="#222" stroke-width="1.2"/>
<polyline points="0.0,598.8 7.5,593.8 18.0,598.8 28.5,588.0 39.0,597.0 49.5,597.0 60.0,600.5 70.5,605.0 81.0,610.0 91.5,602.5 102.0,598.8 112.4,605.0 122.9,602.5 133.4,606.2 143.9,607.5 154.4,591.2 164.9,596.2 175.4,588.2 185.9,591.2 196.4,593.8 206.8,600.0 217.3,589.5 227.8,587.5 238.3,604.2 248.8,583.8 259.3,582.0 269.8,570.0 280.3,567.5 290.8,568.8 301.3,557.5 311.8,562.5 322.2,555.5 332.7,560.0 343.2,561.2 353.7,554.2 364.2,553.0 374.7,563.8 385.2,577.0 395.7,578.8 406.2,584.5 416.7,581.2 427.1,596.2 437.6,603.8 448.1,610.8 458.6,613.0 469.1,609.5 479.6,614.5 490.1,612.5 500.6,580.5 511.1,590.5 521.5,582.5 532.0,583.2 542.5,583.2 553.0,567.5 563.5,569.2 574.0,563.2 584.5,573.8 595.0,568.2 605.5,563.2 616.0,567.0 626.4,564.5 636.9,567.5 647.4,577.0 657.9,590.0 668.4,563.2 678.9,571.2 689.4,565.5 699.9,568.8 710.4,576.2 720.9,570.0 731.4,558.2 741.8,561.8 752.3,560.8 762.8,566.2 773.3,584.2 783.8,581.2 794.3,585.8 804.8,578.2 815.3,582.0 825.8,591.2 836.2,590.5 846.7,592.0 857.2,573.8 867.7,580.8 878.2,569.2 888.7,581.2 899.2,577.0 909.7,565.5 920.2,560.5 930.7,564.5 941.1,568.2 951.6,565.5" fill="none" stroke="#c47a4c" stroke-width="0.95" stroke-linejoin="round"/>
<rect x="-2" y="518.8" width="969.5" height="110.70000000000005" fill="none" stroke="#c4c8d0" stroke-width="1.5"/>
<line x1="979.2" y1="520" x2="979.2" y2="630" stroke="#505050" stroke-width="1"/>
<line x1="975.7" y1="625.5" x2="979.2" y2="625.5" stroke="#505050" stroke-width="1"/>
<line x1="975.7" y1="620.5" x2="979.2" y2="620.5" stroke="#505050" stroke-width="1"/>
<line x1="975.7" y1="615.4" x2="979.2" y2="615.4" stroke="#505050" stroke-width="1"/>
<line x1="975.7" y1="610.4" x2="979.2" y2="610.4" stroke="#505050" stroke-width="1"/>
<line x1="975.7" y1="605.3" x2="979.2" y2="605.3" stroke="#505050" stroke-width="1"/>
<line x1="972.7" y1="600.3" x2="979.2" y2="600.3" stroke="#505050" stroke-width="1"/>
<line x1="975.7" y1="595.2" x2="979.2" y2="595.2" stroke="#505050" stroke-width="1"/>
<line x1="975.7" y1="590.2" x2="979.2" y2="590.2" stroke="#505050" stroke-width="1"/>
<line x1="975.7" y1="585.1" x2="979.2" y2="585.1" stroke="#505050" stroke-width="1"/>
<line x1="975.7" y1="580.1" x2="979.2" y2="580.1" stroke="#505050" stroke-width="1"/>
<line x1="975.7" y1="575.0" x2="979.2" y2="575.0" stroke="#505050" stroke-width="1"/>
<line x1="975.7" y1="570.0" x2="979.2" y2="570.0" stroke="#505050" stroke-width="1"/>
<line x1="975.7" y1="564.9" x2="979.2" y2="564.9" stroke="#505050" stroke-width="1"/>
<line x1="975.7" y1="559.9" x2="979.2" y2="559.9" stroke="#505050" stroke-width="1"/>
<line x1="975.7" y1="554.8" x2="979.2" y2="554.8" stroke="#505050" stroke-width="1"/>
<line x1="972.7" y1="549.8" x2="979.2" y2="549.8" stroke="#505050" stroke-width="1"/>
<line x1="975.7" y1="544.7" x2="979.2" y2="544.7" stroke="#505050" stroke-width="1"/>
<line x1="975.7" y1="539.7" x2="979.2" y2="539.7" stroke="#505050" stroke-width="1"/>
<line x1="975.7" y1="534.6" x2="979.2" y2="534.6" stroke="#505050" stroke-width="1"/>
<line x1="975.7" y1="529.6" x2="979.2" y2="529.6" stroke="#505050" stroke-width="1"/>
<line x1="975.7" y1="524.5" x2="979.2" y2="524.5" stroke="#505050" stroke-width="1"/>
<line x1="975.7" y1="519.5" x2="979.2" y2="519.5" stroke="#505050" stroke-width="1"/>
<rect x="981.6" y="520.9" width="16" height="9.8" fill="#a4a4a4"/>
<text x="981.8" y="529.1" font-size="9" letter-spacing="0.3" fill="#2a2a2a" stroke="#2a2a2a" stroke-width="0.3">100</text>
<rect x="981.6" y="550.9" width="10.8" height="9.8" fill="#f06464"/>
<text x="981.8" y="559.1" font-size="9" letter-spacing="0.3" fill="#7a1010" stroke="#7a1010" stroke-width="0.3">70</text>
<rect x="981.6" y="571.5" width="10.8" height="9.8" fill="#a4a4a4"/>
<text x="981.8" y="579.7" font-size="9" letter-spacing="0.3" fill="#2a2a2a" stroke="#2a2a2a" stroke-width="0.3">50</text>
<rect x="981.6" y="590.6" width="10.8" height="9.8" fill="#f06464"/>
<text x="981.8" y="598.8" font-size="9" letter-spacing="0.3" fill="#7a1010" stroke="#7a1010" stroke-width="0.3">30</text>
<rect x="981.6" y="620.9" width="5.8" height="9.8" fill="#a4a4a4"/>
<text x="981.8" y="629.1" font-size="9" letter-spacing="0.3" fill="#2a2a2a" stroke="#2a2a2a" stroke-width="0.3">0</text>
<text x="1" y="529" font-size="9" stroke-width="0.12" fill="#c86a40" stroke="#c86a40">RSI(XAU/USD.Close, 7): 59,26</text>
<line x1="49.5" y1="637.5" x2="49.5" y2="760" stroke="#d0d0d0" stroke-width="1"/>
<line x1="112.5" y1="637.5" x2="112.5" y2="760" stroke="#d0d0d0" stroke-width="1"/>
<line x1="175.5" y1="637.5" x2="175.5" y2="760" stroke="#d0d0d0" stroke-width="1"/>
<line x1="238.5" y1="637.5" x2="238.5" y2="760" stroke="#d0d0d0" stroke-width="1"/>
<line x1="301.5" y1="637.5" x2="301.5" y2="760" stroke="#d0d0d0" stroke-width="1"/>
<line x1="364.5" y1="637.5" x2="364.5" y2="760" stroke="#d0d0d0" stroke-width="1"/>
<line x1="427.5" y1="637.5" x2="427.5" y2="760" stroke="#d0d0d0" stroke-width="1"/>
<line x1="490.5" y1="637.5" x2="490.5" y2="760" stroke="#d0d0d0" stroke-width="1"/>
<line x1="553.5" y1="637.5" x2="553.5" y2="760" stroke="#d0d0d0" stroke-width="1"/>
<line x1="615.5" y1="637.5" x2="615.5" y2="760" stroke="#d0d0d0" stroke-width="1"/>
<line x1="678.5" y1="637.5" x2="678.5" y2="760" stroke="#d0d0d0" stroke-width="1"/>
<line x1="741.5" y1="637.5" x2="741.5" y2="760" stroke="#d0d0d0" stroke-width="1"/>
<line x1="804.5" y1="637.5" x2="804.5" y2="760" stroke="#d0d0d0" stroke-width="1"/>
<line x1="867.5" y1="637.5" x2="867.5" y2="760" stroke="#d0d0d0" stroke-width="1"/>
<line x1="930.5" y1="637.5" x2="930.5" y2="760" stroke="#d0d0d0" stroke-width="1"/>
<line x1="0" y1="684.5" x2="967.5" y2="684.5" stroke="#d0d0d0" stroke-width="1"/>
<rect x="4" y="724.25" width="6" height="35.8" fill="#1a80e6"/>
<rect x="15" y="708" width="6" height="52.0" fill="#1a80e6"/>
<rect x="25" y="719.5" width="6" height="40.5" fill="#1a80e6"/>
<rect x="36" y="721" width="6" height="39.0" fill="#1a80e6"/>
<rect x="46" y="717" width="6" height="43.0" fill="#1a80e6"/>
<rect x="56" y="714.5" width="6" height="45.5" fill="#1a80e6"/>
<rect x="67" y="710" width="6" height="50.0" fill="#1a80e6"/>
<rect x="77" y="716.25" width="6" height="43.8" fill="#1a80e6"/>
<rect x="88" y="726.75" width="6" height="33.2" fill="#1a80e6"/>
<rect x="98" y="717" width="6" height="43.0" fill="#1a80e6"/>
<rect x="109" y="707" width="6" height="53.0" fill="#1a80e6"/>
<rect x="119" y="708" width="6" height="52.0" fill="#1a80e6"/>
<rect x="130" y="697.5" width="6" height="62.5" fill="#1a80e6"/>
<rect x="140" y="712" width="6" height="48.0" fill="#1a80e6"/>
<rect x="151" y="703.25" width="6" height="56.8" fill="#1a80e6"/>
<rect x="161" y="713.75" width="6" height="46.2" fill="#1a80e6"/>
<rect x="172" y="707" width="6" height="53.0" fill="#1a80e6"/>
<rect x="182" y="716.25" width="6" height="43.8" fill="#1a80e6"/>
<rect x="193" y="721.75" width="6" height="38.2" fill="#1a80e6"/>
<rect x="203" y="706.5" width="6" height="53.5" fill="#1a80e6"/>
<rect x="214" y="710" width="6" height="50.0" fill="#1a80e6"/>
<rect x="224" y="703.25" width="6" height="56.8" fill="#1a80e6"/>
<rect x="235" y="710" width="6" height="50.0" fill="#1a80e6"/>
<rect x="245" y="714.5" width="6" height="45.5" fill="#1a80e6"/>
<rect x="256" y="714.5" width="6" height="45.5" fill="#1a80e6"/>
<rect x="266" y="705" width="6" height="55.0" fill="#1a80e6"/>
<rect x="277" y="708.25" width="6" height="51.8" fill="#1a80e6"/>
<rect x="287" y="718.75" width="6" height="41.2" fill="#1a80e6"/>
<rect x="298" y="723" width="6" height="37.0" fill="#1a80e6"/>
<rect x="308" y="722" width="6" height="38.0" fill="#1a80e6"/>
<rect x="319" y="678.25" width="6" height="81.8" fill="#1a80e6"/>
<rect x="329" y="687" width="6" height="73.0" fill="#1a80e6"/>
<rect x="340" y="717" width="6" height="43.0" fill="#1a80e6"/>
<rect x="350" y="726.75" width="6" height="33.2" fill="#1a80e6"/>
<rect x="361" y="716.25" width="6" height="43.8" fill="#1a80e6"/>
<rect x="371" y="726.75" width="6" height="33.2" fill="#1a80e6"/>
<rect x="382" y="723" width="6" height="37.0" fill="#1a80e6"/>
<rect x="392" y="731.25" width="6" height="28.8" fill="#1a80e6"/>
<rect x="403" y="734.25" width="6" height="25.8" fill="#1a80e6"/>
<rect x="413" y="723.75" width="6" height="36.2" fill="#1a80e6"/>
<rect x="424" y="725" width="6" height="35.0" fill="#1a80e6"/>
<rect x="434" y="705.75" width="6" height="54.2" fill="#1a80e6"/>
<rect x="445" y="681.75" width="6" height="78.2" fill="#1a80e6"/>
<rect x="455" y="720.5" width="6" height="39.5" fill="#1a80e6"/>
<rect x="466" y="721.25" width="6" height="38.8" fill="#1a80e6"/>
<rect x="476" y="695.5" width="6" height="64.5" fill="#1a80e6"/>
<rect x="487" y="709.25" width="6" height="50.8" fill="#1a80e6"/>
<rect x="497" y="684.5" width="6" height="75.5" fill="#1a80e6"/>
<rect x="508" y="693" width="6" height="67.0" fill="#1a80e6"/>
<rect x="518" y="692" width="6" height="68.0" fill="#1a80e6"/>
<rect x="529" y="698.75" width="6" height="61.2" fill="#1a80e6"/>
<rect x="539" y="708.25" width="6" height="51.8" fill="#1a80e6"/>
<rect x="550" y="685.75" width="6" height="74.2" fill="#1a80e6"/>
<rect x="560" y="695.5" width="6" height="64.5" fill="#1a80e6"/>
<rect x="571" y="708.25" width="6" height="51.8" fill="#1a80e6"/>
<rect x="581" y="677.5" width="6" height="82.5" fill="#1a80e6"/>
<rect x="591" y="692" width="6" height="68.0" fill="#1a80e6"/>
<rect x="602" y="696.25" width="6" height="63.8" fill="#1a80e6"/>
<rect x="612" y="723.75" width="6" height="36.2" fill="#1a80e6"/>
<rect x="623" y="710" width="6" height="50.0" fill="#1a80e6"/>
<rect x="633" y="728.25" width="6" height="31.8" fill="#1a80e6"/>
<rect x="644" y="720.5" width="6" height="39.5" fill="#1a80e6"/>
<rect x="654" y="704.25" width="6" height="55.8" fill="#1a80e6"/>
<rect x="665" y="643" width="6" height="117.0" fill="#1a80e6"/>
<rect x="675" y="695.5" width="6" height="64.5" fill="#1a80e6"/>
<rect x="686" y="709.25" width="6" height="50.8" fill="#1a80e6"/>
<rect x="696" y="700.75" width="6" height="59.2" fill="#1a80e6"/>
<rect x="707" y="706.75" width="6" height="53.2" fill="#1a80e6"/>
<rect x="717" y="716.25" width="6" height="43.8" fill="#1a80e6"/>
<rect x="728" y="682.5" width="6" height="77.5" fill="#1a80e6"/>
<rect x="738" y="691.25" width="6" height="68.8" fill="#1a80e6"/>
<rect x="749" y="690" width="6" height="70.0" fill="#1a80e6"/>
<rect x="759" y="695.5" width="6" height="64.5" fill="#1a80e6"/>
<rect x="770" y="691.25" width="6" height="68.8" fill="#1a80e6"/>
<rect x="780" y="674.25" width="6" height="85.8" fill="#1a80e6"/>
<rect x="791" y="681.75" width="6" height="78.2" fill="#1a80e6"/>
<rect x="801" y="702" width="6" height="58.0" fill="#1a80e6"/>
<rect x="812" y="719.5" width="6" height="40.5" fill="#1a80e6"/>
<rect x="822" y="713" width="6" height="47.0" fill="#1a80e6"/>
<rect x="833" y="721" width="6" height="39.0" fill="#1a80e6"/>
<rect x="843" y="738.75" width="6" height="21.2" fill="#1a80e6"/>
<rect x="854" y="733" width="6" height="27.0" fill="#1a80e6"/>
<rect x="864" y="717" width="6" height="43.0" fill="#1a80e6"/>
<rect x="875" y="700.75" width="6" height="59.2" fill="#1a80e6"/>
<rect x="885" y="724.25" width="6" height="35.8" fill="#1a80e6"/>
<rect x="896" y="708" width="6" height="52.0" fill="#1a80e6"/>
<rect x="906" y="695.5" width="6" height="64.5" fill="#1a80e6"/>
<rect x="917" y="699.25" width="6" height="60.8" fill="#1a80e6"/>
<rect x="927" y="709.25" width="6" height="50.8" fill="#1a80e6"/>
<rect x="938" y="717" width="6" height="43.0" fill="#1a80e6"/>
<rect x="948" y="743.75" width="6" height="16.2" fill="#1a80e6"/>
<rect x="-2" y="637.5" width="969.5" height="122.5" fill="none" stroke="#c4c8d0" stroke-width="1.5"/>
<line x1="979.2" y1="638" x2="979.2" y2="747" stroke="#505050" stroke-width="1"/>
<line x1="975.7" y1="642.8" x2="979.2" y2="642.8" stroke="#505050" stroke-width="1"/>
<line x1="973.2" y1="649.8" x2="979.2" y2="649.8" stroke="#505050" stroke-width="1"/>
<line x1="975.7" y1="656.7" x2="979.2" y2="656.7" stroke="#505050" stroke-width="1"/>
<line x1="975.7" y1="663.7" x2="979.2" y2="663.7" stroke="#505050" stroke-width="1"/>
<line x1="975.7" y1="670.6" x2="979.2" y2="670.6" stroke="#505050" stroke-width="1"/>
<line x1="975.7" y1="677.6" x2="979.2" y2="677.6" stroke="#505050" stroke-width="1"/>
<line x1="973.2" y1="684.5" x2="979.2" y2="684.5" stroke="#505050" stroke-width="1"/>
<line x1="975.7" y1="691.5" x2="979.2" y2="691.5" stroke="#505050" stroke-width="1"/>
<line x1="975.7" y1="698.4" x2="979.2" y2="698.4" stroke="#505050" stroke-width="1"/>
<line x1="975.7" y1="705.4" x2="979.2" y2="705.4" stroke="#505050" stroke-width="1"/>
<line x1="975.7" y1="712.3" x2="979.2" y2="712.3" stroke="#505050" stroke-width="1"/>
<line x1="973.2" y1="719.3" x2="979.2" y2="719.3" stroke="#505050" stroke-width="1"/>
<line x1="975.7" y1="726.2" x2="979.2" y2="726.2" stroke="#505050" stroke-width="1"/>
<line x1="975.7" y1="733.2" x2="979.2" y2="733.2" stroke="#505050" stroke-width="1"/>
<line x1="975.7" y1="740.1" x2="979.2" y2="740.1" stroke="#505050" stroke-width="1"/>
<line x1="967.5" y1="684.5" x2="979.2" y2="684.5" stroke="#505050" stroke-width="1"/>
<text x="982" y="688.1" font-size="9" fill="#5a5a68" stroke="#5a5a68" stroke-width="0.3">250.000</text>
<text x="1" y="648" font-size="9" stroke-width="0.12" fill="#5a9ad8" stroke="#5a9ad8">XAU/USD - Volume: 34.530</text>
<line x1="474.1" y1="61.75" x2="474.1" y2="358.8" stroke="#505050" stroke-width="1.4" stroke-dasharray="1.7,3.1"/>
<line x1="484.5" y1="61.75" x2="484.5" y2="358.8" stroke="#000" stroke-width="1.3" stroke-dasharray="2.6,2.4"/>
<line x1="474.1" y1="400" x2="474.1" y2="511.3" stroke="#505050" stroke-width="1.4" stroke-dasharray="1.7,3.1"/>
<line x1="484.5" y1="400" x2="484.5" y2="511.3" stroke="#000" stroke-width="1.3" stroke-dasharray="2.6,2.4"/>
<line x1="474.1" y1="519" x2="474.1" y2="629.5" stroke="#505050" stroke-width="1.4" stroke-dasharray="1.7,3.1"/>
<line x1="484.5" y1="519" x2="484.5" y2="629.5" stroke="#000" stroke-width="1.3" stroke-dasharray="2.6,2.4"/>
<line x1="474.1" y1="637.5" x2="474.1" y2="747" stroke="#505050" stroke-width="1.4" stroke-dasharray="1.7,3.1"/>
<line x1="484.5" y1="637.5" x2="484.5" y2="747" stroke="#000" stroke-width="1.3" stroke-dasharray="2.6,2.4"/>
</svg>
<svg style="position:absolute;left:0;top:0" width="1024" height="36" viewBox="0 0 1024 36" font-family='"Liberation Sans", sans-serif'>
<defs>
<linearGradient id="tbg" x1="0" y1="0" x2="0" y2="1">
<stop offset="0" stop-color="#fbfbfd"/><stop offset="0.45" stop-color="#f1f1f6"/><stop offset="1" stop-color="#d2d3df"/>
</linearGradient>
<linearGradient id="org" x1="0" y1="0" x2="0" y2="1">
<stop offset="0" stop-color="#f9b45a"/><stop offset="1" stop-color="#f4973a"/>
</linearGradient>
<radialGradient id="glb" cx="0.4" cy="0.35" r="0.7">
<stop offset="0" stop-color="#b8dcf8"/><stop offset="0.6" stop-color="#5aa2e0"/><stop offset="1" stop-color="#2f78c0"/>
</radialGradient>
</defs>
<rect x="0" y="0" width="1024" height="34" fill="#efeff4"/>
<rect x="0" y="0" width="1024" height="1.5" fill="#e6e6ec"/>
<rect x="0" y="5" width="888" height="27" fill="url(#tbg)"/>
<rect x="0" y="32" width="888" height="1.3" fill="#9c9cae"/>
<rect x="0" y="33.3" width="888" height="1" fill="#d4d4de"/>
<rect x="890" y="5" width="1" height="28" fill="#e4e4ea"/>
<rect x="0" y="34.3" width="1024" height="2" fill="#ffffff"/>
<!-- separators -->
<g fill="#dcdce4">
<rect x="3.5" y="6" width="1" height="26"/>
<rect x="190" y="6" width="1" height="26"/>
<rect x="498.5" y="6" width="1" height="26"/>
<rect x="532" y="6" width="1" height="26"/>
<rect x="807.5" y="6" width="1" height="26"/>
<rect x="841" y="6" width="1" height="26"/>
<rect x="871.5" y="6" width="1" height="26"/>
</g>
<!-- combos -->
<rect x="9" y="12" width="64" height="15.3" fill="#fff"/>
<rect x="63.5" y="16" width="9.5" height="10.5" fill="#ebebf0"/>
<polygon points="65.8,18 71,18 68.4,21" fill="#111"/>
<text x="11.4" y="22" font-size="9" fill="#303038">XAU/USD</text>
<rect x="115.7" y="12" width="69.2" height="15.3" fill="#fff"/>
<rect x="173.5" y="16" width="11" height="10.5" fill="#ebebf0"/>
<polygon points="176,18 181.7,18 178.85,21" fill="#111"/>
<text x="118.3" y="22" font-size="9" fill="#303038">D1</text>
<!-- chain X icon -->
<g>
<ellipse cx="89" cy="17.5" rx="3.2" ry="2.3" fill="none" stroke="#2a4f80" stroke-width="1.6"/>
<ellipse cx="93.5" cy="17.5" rx="3.2" ry="2.3" fill="none" stroke="#2a4f80" stroke-width="1.6"/>
<path d="M92,19.5 L96.5,24 M96.5,19.5 L92,24" stroke="#e02020" stroke-width="1.6"/>
</g>
<!-- small dropdown arrows -->
<g fill="#8a8a98">
<polygon points="107.3,17.8 111.7,17.8 109.5,20"/>
<polygon points="223,17.8 226.8,17.8 224.9,20"/>
<polygon points="378,17.8 381.3,17.8 379.65,19.8"/>
<polygon points="622.7,17.8 625.9,17.8 624.3,19.8"/>
<polygon points="659.5,17.8 663.3,17.8 661.4,19.8"/>
<polygon points="696.4,17.8 700.2,17.8 698.3,19.8"/>
<polygon points="733.9,17.8 737,17.8 735.45,19.8"/>
<polygon points="770.7,17.8 774.5,17.8 772.6,19.8"/>
</g>
<!-- chart icon -->
<rect x="200.5" y="13" width="11.5" height="10" fill="#f4f8fc" stroke="#3a6aa8" stroke-width="1.2"/>
<polyline points="201.5,20 204,17 206.5,20 209,16.5 211.5,19.5" fill="none" stroke="#d02020" stroke-width="1.2"/>
<polyline points="201.5,18 204,20 206.5,17.5" fill="none" stroke="#303030" stroke-width="0.6"/>
<g fill="#e8b0b0"><rect x="203" y="25" width="1.5" height="1"/><rect x="206" y="25" width="1.5" height="1"/><rect x="209" y="25" width="1.5" height="1"/></g>
<!-- Bid button -->
<rect x="235" y="6.3" width="26.2" height="24.8" fill="url(#org)" stroke="#c88a4a" stroke-width="0.8"/>
<text x="242.8" y="20" font-size="8.2" letter-spacing="0.35" fill="#2a1a0c" stroke="#2a1a0c" stroke-width="0.35">Bid</text>
<rect x="242.2" y="22.3" width="13" height="1.3" fill="#4a66a8"/>
<text x="269.7" y="20" font-size="8.2" letter-spacing="0.2" fill="#2a2a34" stroke="#2a2a34" stroke-width="0.35">Ask</text>
<rect x="269.5" y="22.7" width="13.5" height="1.2" fill="#e85a40"/>
<!-- zoom out -->
<circle cx="303.5" cy="12.8" r="2.6" fill="none" stroke="#d8d8dc" stroke-width="1"/>
<circle cx="301.5" cy="20" r="2.9" fill="#1f4f9a"/>
<rect x="299.8" y="19.5" width="3.4" height="1" fill="#fff"/>
<path d="M304,17 L310.5,21 L306.5,24.5" fill="none" stroke="#2a2a30" stroke-width="1.2"/>
<!-- zoom in cursor -->
<path d="M331.5,10.5 L331.5,22 L334,19.5 L336,24 L337.6,23.3 L335.6,19 L338.8,19 Z" fill="#f4f4f8" stroke="#8a8a94" stroke-width="0.8"/>
<circle cx="330.3" cy="20.5" r="2.9" fill="#1f4f9a"/>
<path d="M328.8,20.5 h3 M330.3,19 v3" stroke="#fff" stroke-width="0.9"/>
<!-- vertical zoom -->
<path d="M356.2,14.5 V25 M354.7,16 L356.2,14.3 L357.7,16 M354.7,23.5 L356.2,25.2 L357.7,23.5" fill="none" stroke="#202024" stroke-width="1"/>
<circle cx="361" cy="18.5" r="3" fill="#dff0f8" stroke="#303038" stroke-width="1.1"/>
<path d="M363,20.8 L366,24" stroke="#303038" stroke-width="1.4"/>
<!-- green I icon -->
<rect x="393.5" y="14" width="9.2" height="1.8" fill="#1a3a1a"/>
<rect x="393.5" y="23" width="9.2" height="1.8" fill="#1a3a1a"/>
<rect x="396.5" y="15.5" width="3.2" height="7.8" fill="#3aa03a"/>
<path d="M398.1,16 v6" stroke="#d8f0d0" stroke-width="0.7"/>
<!-- window + pencil -->
<rect x="420.5" y="11" width="12" height="11" fill="#f6f8fc" stroke="#4a78c0" stroke-width="1"/>
<rect x="420.5" y="11" width="12" height="2.5" fill="#5a8ad0"/>
<path d="M425.5,23.5 L432,16.5 L434,18.5 L427.5,25 Z" fill="#f0c030"/>
<rect x="422" y="25.5" width="10" height="1" fill="#d8d8f0"/>
<!-- eye -->
<path d="M450,19.5 Q456,13.5 462,19.5 Q456,25 450,19.5 Z" fill="none" stroke="#a8a8b0" stroke-width="1.1"/>
<circle cx="456" cy="19.5" r="1.8" fill="#b0b0b8"/>
<path d="M452,14.5 Q457,11 461,14" fill="none" stroke="#a8a8b0" stroke-width="1"/>
<polygon points="460,12 463,13.5 460.5,16" fill="#707078"/>
<!-- globe -->
<circle cx="483" cy="18.2" r="6" fill="url(#glb)"/>
<path d="M481,16 L486,21" stroke="#e8f4fc" stroke-width="0.8"/>
<!-- ruler -->
<path d="M509.5,21.5 L519.5,12 L522.5,15 L512.5,24.5 Z" fill="#f0d860" stroke="#c8a830" stroke-width="0.7"/>
<g stroke="#8a7020" stroke-width="0.6"><path d="M512,20 l1.2,1.2 M514,18 l1.2,1.2 M516,16.2 l1.2,1.2 M518,14.4 l1.2,1.2"/></g>
<!-- image icon -->
<rect x="543" y="13" width="12" height="11" fill="#f8fbff" stroke="#1f5fa0" stroke-width="1.1"/>
<path d="M543.5,23.5 L547,18 L549.5,21 L552,17.5 L554.5,21 V23.5 Z" fill="#2a8a3a"/>
<circle cx="544.5" cy="13.5" r="2" fill="#7acb6a"/>
<!-- window overlap icon -->
<rect x="570" y="13" width="10.5" height="8.5" fill="#e8eef8" stroke="#4a6a98" stroke-width="1"/>
<rect x="570" y="13" width="10.5" height="2" fill="#6a94c8"/>
<rect x="573" y="17" width="10.5" height="8.5" fill="#f6f6fa" stroke="#2a2a34" stroke-width="1"/>
<path d="M574,22 Q576,19 578.5,21 T583,20" fill="none" stroke="#505060" stroke-width="0.6"/>
<!-- pitchfork -->
<g stroke="#3a3a44" stroke-width="1.1" fill="none">
<path d="M600,24 L611.5,13"/><path d="M604,14 L608.5,20.5"/><path d="M607.5,18.5 L611.5,16.5"/><path d="M605,21.5 L610.5,19.5"/>
</g>
<!-- lines icon -->
<g fill="#303840">
<rect x="636.6" y="14" width="13.4" height="2"/>
<rect x="636.6" y="17.5" width="13.4" height="2"/>
<rect x="636.6" y="21.5" width="10" height="2"/>
<rect x="647" y="21" width="2.5" height="3.5"/>
</g>
<!-- fan -->
<g stroke="#3a3a44" stroke-width="1" fill="none">
<path d="M675,24 L681,14"/><path d="M675,24 L684.5,15.5"/><path d="M675,24 L685,19"/>
</g>
<!-- green line -->
<path d="M712,24 L721,14.5" stroke="#6aa030" stroke-width="2.2" stroke-linecap="round"/>
<circle cx="721" cy="14.5" r="1.3" fill="#404040"/>
<circle cx="712" cy="24" r="1" fill="#4a7a20"/>
<!-- ellipse -->
<ellipse cx="754.5" cy="19.2" rx="6.4" ry="4.6" fill="#cfe2f6" stroke="#8aa8c8" stroke-width="0.9"/>
<!-- ABC -->
<text x="784.5" y="17.6" font-size="6.2" font-weight="bold" fill="#1a1a20" font-family='"Liberation Mono", monospace'>ABC</text>
<circle cx="793" cy="21" r="2.6" fill="#1f4f9a"/>
<path d="M791.5,21 h3 M793,19.5 v3" stroke="#fff" stroke-width="0.9"/>
<!-- eraser -->
<path d="M818.5,22 L826,13.5 Q828,12 830.5,14 Q832,16 830.5,17.5 L823,25 Q820,26 818.5,24 Z" fill="#f0f0f2" stroke="#a0a0a8" stroke-width="0.8"/>
<path d="M824.5,15 L826,13.5 Q828,12 830.5,14 Q832,16 830.5,17.5 L829,19 Z" fill="#e87890"/>
<!-- network -->
<rect x="855.5" y="13.3" width="4" height="4" fill="#3a8ad8" stroke="#2a5a98" stroke-width="0.6"/>
<path d="M857.5,17.3 V20 M852.5,20 H862.5 M852.5,20 v2 M857.5,20 v2 M862.5,20 v2" stroke="#3a4a2a" stroke-width="0.8" fill="none"/>
<rect x="851" y="21.5" width="13" height="3.3" fill="#8ac830" stroke="#4a7a20" stroke-width="0.6"/>
<!-- overflow -->
<g fill="#8a8a94">
<rect x="877" y="14.6" width="6" height="1"/>
<rect x="877" y="16.6" width="6" height="1"/>
<rect x="877" y="18.6" width="6" height="1"/>
<polygon points="880.5,20.2 884.4,20.2 882.45,22.2"/>
</g>
</svg>

</body></html>
